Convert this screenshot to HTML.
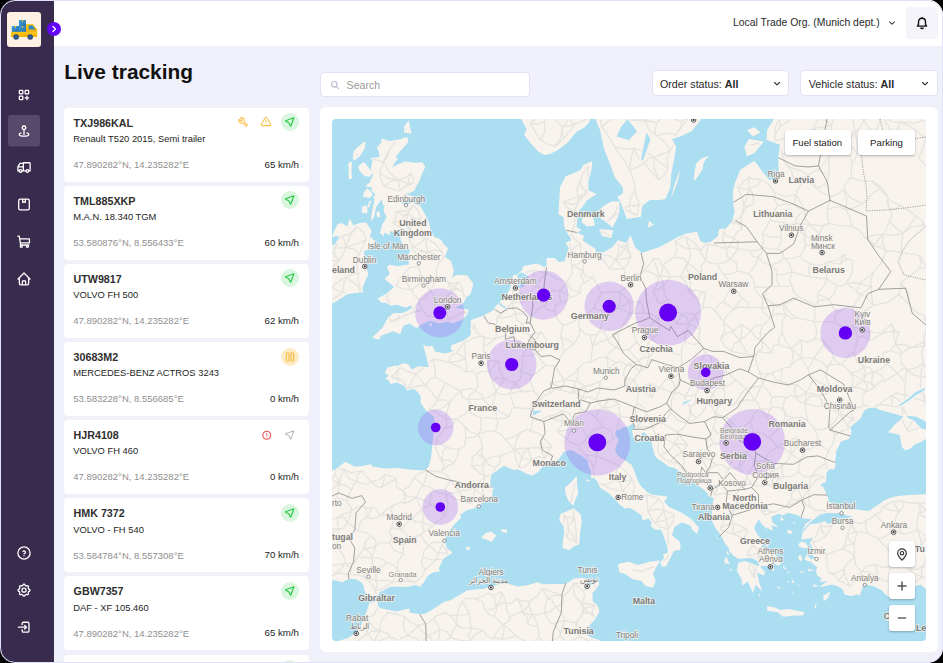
<!DOCTYPE html>
<html><head><meta charset="utf-8">
<style>
*{box-sizing:border-box;margin:0;padding:0}
html,body{width:943px;height:663px;overflow:hidden;background:#000;font-family:"Liberation Sans",sans-serif}
#frame{position:absolute;left:0;top:0;width:943px;height:663px;border-radius:15px;overflow:hidden;background:#f0f0fb}
#frame:after{content:"";position:absolute;left:0;top:0;right:0;bottom:0;border:1.5px solid #e0e0f6;border-radius:15px;pointer-events:none}
#side{position:absolute;left:0;top:0;width:54px;height:663px;background:#382b4d}
#logo{position:absolute;left:7px;top:12px;width:34px;height:35px;background:#fcf1e3;border-radius:3px}
#collapse{position:absolute;left:47px;top:22px;width:14px;height:14px;border-radius:50%;background:#6405fb}
#header{position:absolute;left:54px;top:0;width:889px;height:46px;background:#fff}
.abs{position:absolute;line-height:1;white-space:nowrap}
.navi{position:absolute;left:8px;width:32px;height:32px}
.card{position:absolute;left:64px;width:245px;height:74px;background:#fff;border-radius:4px}
.card div{position:absolute;line-height:1;white-space:nowrap}
.plate{left:9.6px;top:10px;font-weight:bold;font-size:10.7px;color:#2e2e2e}
.model{left:9.2px;top:26.3px;font-size:9.4px;color:#1e1e1e}
.coord{left:9.2px;top:52.3px;font-size:9.5px;color:#8f8f8f}
.speed{right:10px;top:52px;font-size:9.7px;color:#1e1e1e}
.card svg{position:absolute}
#search{position:absolute;left:320px;top:72px;width:210px;height:25px;background:#fff;border:1px solid #e2e2f2;border-radius:4px}
.dd{position:absolute;top:70.3px;height:26px;background:#fff;border:1px solid #e2e2f2;border-radius:4px}
#mappanel{position:absolute;left:320px;top:107px;width:618px;height:545px;background:#fff;border-radius:6px}
#map{position:absolute;left:332px;top:119px;width:594px;height:522px;border-radius:4px;overflow:hidden;background:#acdef2}
.mbtn{position:absolute;background:#fff;border-radius:3px;box-shadow:0 1px 2.5px rgba(0,0,0,.28)}
.lbl{position:absolute;line-height:1;white-space:nowrap;color:#6f6f6f;font-size:8px}
</style></head>
<body>
<div id="frame">
  <div id="header"></div>
  <div id="side"></div>
  <div id="logo">
    <svg width="34" height="35" viewBox="0 0 34 35">
      <defs><linearGradient id="bx" x1="0" y1="0" x2="1" y2="1"><stop offset="0" stop-color="#3aa0d8"/><stop offset="1" stop-color="#2a6fb0"/></linearGradient>
      <linearGradient id="tk" x1="0" y1="0" x2="0" y2="1"><stop offset="0" stop-color="#f8c91e"/><stop offset="1" stop-color="#f0b000"/></linearGradient></defs>
      <rect x="12" y="8" width="7" height="6" fill="url(#bx)"/>
      <rect x="4.8" y="14" width="7.2" height="6" fill="url(#bx)"/>
      <rect x="12" y="14" width="7" height="6" fill="url(#bx)"/>
      <rect x="14.9" y="8" width="1.2" height="1.8" fill="#f6c21a"/><rect x="7.8" y="14" width="1.2" height="1.8" fill="#f6c21a"/><rect x="14.9" y="14" width="1.2" height="1.8" fill="#f6c21a"/>
      <path d="M19 12h6.8l4.3 5.6v3H19z" fill="url(#tk)"/>
      <path d="M21.6 13.6h3.9l3.1 3.9h-7z" fill="#2f86c6"/>
      <rect x="4" y="19.8" width="26.1" height="5.2" fill="url(#tk)"/>
      <circle cx="9.1" cy="25" r="2.8" fill="#2b4f82"/><circle cx="23.2" cy="25" r="2.8" fill="#2b4f82"/>
      <circle cx="9.1" cy="25" r="1.1" fill="#3d6aa0"/><circle cx="23.2" cy="25" r="1.1" fill="#3d6aa0"/>
    </svg>
  </div>
  <div id="collapse"><svg width="14" height="14" viewBox="0 0 14 14"><path d="M6 4.5l2.5 2.5L6 9.5" fill="none" stroke="#fff" stroke-width="1.3" stroke-linecap="round" stroke-linejoin="round"/></svg></div>

  <!-- sidebar icons -->
  <svg class="abs" style="left:0;top:0" width="54" height="663" viewBox="0 0 54 663" fill="none" stroke="#fff" stroke-linecap="round" stroke-linejoin="round">
    <rect x="8" y="115" width="32" height="31.5" rx="3" fill="#56496c" stroke="none"/>
<path transform="translate(17.04 88.04) scale(0.58)" d="M4 4m0 1a1 1 0 0 1 1 -1h4a1 1 0 0 1 1 1v4a1 1 0 0 1 -1 1h-4a1 1 0 0 1 -1 -1z M14 4m0 1a1 1 0 0 1 1 -1h4a1 1 0 0 1 1 1v4a1 1 0 0 1 -1 1h-4a1 1 0 0 1 -1 -1z M4 14m0 1a1 1 0 0 1 1 -1h4a1 1 0 0 1 1 1v4a1 1 0 0 1 -1 1h-4a1 1 0 0 1 -1 -1z M14 17h6m-3 -3v6" stroke-width="2.24"/><path transform="translate(16.80 123.60) scale(0.6)" d="M12 7m-3 0a3 3 0 1 0 6 0a3 3 0 1 0 -6 0 M12 10v8 M7 15.5c-2 .7 -3 1.5 -3 2.5c0 1.7 3.6 3 8 3s8 -1.3 8 -3c0 -1 -1 -1.8 -3 -2.5" stroke-width="2.17"/><path transform="translate(15.84 159.34) scale(0.68)" d="M17 17m-2 0a2 2 0 1 0 4 0a2 2 0 1 0 -4 0 M7 17m-2 0a2 2 0 1 0 4 0a2 2 0 1 0 -4 0 M19 17h2v-11a1 1 0 0 0 -1 -1h-9v12m4 0h-6m-4 0h-2v-6h8m0 -5h-5l-3 5" stroke-width="1.91"/><path transform="translate(16.08 196.58) scale(0.66)" d="M4 4m0 2a2 2 0 0 1 2 -2h12a2 2 0 0 1 2 2v12a2 2 0 0 1 -2 2h-12a2 2 0 0 1 -2 -2z M10 4v5l2 -1l2 1v-5" stroke-width="1.97"/><path transform="translate(15.84 233.44) scale(0.68)" d="M8 19m-1.6 0a1.6 1.6 0 1 0 3.2 0a1.6 1.6 0 1 0 -3.2 0 M17 19m-1.6 0a1.6 1.6 0 1 0 3.2 0a1.6 1.6 0 1 0 -3.2 0 M3 4h2l2 13h12 M7 8h13v6h-12" stroke-width="1.91"/><path transform="translate(16.08 271.08) scale(0.66)" d="M5 12l-2 0l9 -9l9 9l-2 0 M5 12v7a2 2 0 0 0 2 2h10a2 2 0 0 0 2 -2v-7 M9.5 21v-5a1 1 0 0 1 1 -1h3a1 1 0 0 1 1 1v5" stroke-width="1.97"/><path transform="translate(15.84 544.84) scale(0.68)" d="M12 12m-9 0a9 9 0 1 0 18 0a9 9 0 1 0 -18 0 M12 16v.01 M12 13a2 2 0 0 0 .914 -3.782a1.98 1.98 0 0 0 -2.414 .483" stroke-width="1.91"/><path transform="translate(16.08 582.28) scale(0.66)" d="M10.325 4.317c.426 -1.756 2.924 -1.756 3.35 0a1.724 1.724 0 0 0 2.573 1.066c1.543 -.94 3.31 .826 2.37 2.37a1.724 1.724 0 0 0 1.065 2.572c1.756 .426 1.756 2.924 0 3.35a1.724 1.724 0 0 0 -1.066 2.573c.94 1.543 -.826 3.31 -2.37 2.37a1.724 1.724 0 0 0 -2.572 1.065c-.426 1.756 -2.924 1.756 -3.35 0a1.724 1.724 0 0 0 -2.573 -1.066c-1.543 .94 -3.31 -.826 -2.37 -2.37a1.724 1.724 0 0 0 -1.065 -2.572c-1.756 -.426 -1.756 -2.924 0 -3.35a1.724 1.724 0 0 0 1.066 -2.573c-.94 -1.543 .826 -3.31 2.37 -2.37c1 .608 2.296 .07 2.572 -1.065z M9 12a3 3 0 1 0 6 0a3 3 0 0 0 -6 0" stroke-width="1.97"/><path transform="translate(16.56 619.76) scale(0.62)" d="M9 8v-2a2 2 0 0 1 2 -2h7a2 2 0 0 1 2 2v12a2 2 0 0 1 -2 2h-7a2 2 0 0 1 -2 -2v-2 M3 12h13l-3 -3m0 6l3 -3" stroke-width="2.10"/>
  </svg>

  <div class="abs" style="left:64.2px;top:61.6px;font-size:20.9px;font-weight:bold;color:#111">Live tracking</div>

  <!-- header -->
  <div class="abs" style="left:733px;top:18.2px;font-size:10.4px;color:#2a2a2a">Local Trade Org. (Munich dept.)</div>
  <svg class="abs" style="left:887px;top:19px" width="10" height="8"><path d="M2.5 2.8l2.5 2.4 2.5-2.4" fill="none" stroke="#444" stroke-width="1.1" stroke-linecap="round" stroke-linejoin="round"/></svg>
  <div class="abs" style="left:906px;top:7px;width:32px;height:32px;background:#f4f4fa;border-radius:4px"></div>
  <svg class="abs" style="left:914px;top:15px" width="16" height="16" viewBox="0 0 16 16" fill="none" stroke="#111" stroke-width="1.4" stroke-linejoin="round"><path d="M8 3.2c-2.1 0-3.5 1.6-3.5 3.7v2.6l-1.1 1.6h9.2l-1.1-1.6V6.9c0-2.1-1.4-3.7-3.5-3.7z"/><path d="M8 2.2v1"/><path d="M6.6 12.6c.3.6.8.9 1.4.9s1.1-.3 1.4-.9"/></svg>

  <!-- search & filters -->
  <div id="search"></div>
  <svg class="abs" style="left:330px;top:80px" width="10" height="10" viewBox="0 0 10 10" fill="none" stroke="#b9b9d0" stroke-width="1.1"><circle cx="4.3" cy="4.3" r="2.8"/><path d="M6.4 6.4l2.2 2.2" stroke-linecap="round"/></svg>
  <div class="abs" style="left:346.6px;top:80.2px;font-size:10.6px;color:#9a9a9a">Search</div>
  <div class="dd" style="left:652px;width:137px"></div>
  <div class="abs" style="left:660px;top:79.2px;font-size:10.7px;color:#2a2a2a">Order status: <b>All</b></div>
  <svg class="abs" style="left:772px;top:79.5px" width="10" height="8"><path d="M2.5 2.5l2.5 2.4 2.5-2.4" fill="none" stroke="#333" stroke-width="1.1" stroke-linecap="round" stroke-linejoin="round"/></svg>
  <div class="dd" style="left:800px;width:138px"></div>
  <div class="abs" style="left:808.7px;top:79.2px;font-size:10.7px;color:#2a2a2a">Vehicle status: <b>All</b></div>
  <svg class="abs" style="left:920px;top:79.5px" width="10" height="8"><path d="M2.5 2.5l2.5 2.4 2.5-2.4" fill="none" stroke="#333" stroke-width="1.1" stroke-linecap="round" stroke-linejoin="round"/></svg>

  <div class="card" style="top:107.50px"><div class="plate">TXJ986KAL</div><div class="model">Renault T520 2015, Semi trailer</div><div class="coord">47.890282°N, 14.235282°E</div><div class="speed">65 km/h</div><svg style="left:170px;top:5.5px" width="18" height="18" viewBox="0 0 18 18"><path transform="translate(3.5 3.3) scale(0.46)" d="M7 10h3v-3l-3.5 -3.5a6 6 0 0 1 8 8l6 6a2 2 0 0 1 -3 3l-6 -6a6 6 0 0 1 -8 -8l3.5 3.5" fill="none" stroke="#fbbf4a" stroke-width="2.3" stroke-linejoin="round" stroke-linecap="round"/></svg><svg style="left:192.5px;top:5.5px" width="18" height="18" viewBox="0 0 18 18"><path transform="translate(3.2 3.0) scale(0.48)" d="M12 9v4 M10.363 3.591l-8.106 13.534a1.914 1.914 0 0 0 1.636 2.871h16.214a1.914 1.914 0 0 0 1.636 -2.87l-8.106 -13.536a1.914 1.914 0 0 0 -3.274 0z M12 16h.01" fill="none" stroke="#fbbf4a" stroke-width="2.2" stroke-linejoin="round" stroke-linecap="round"/></svg><svg style="left:216.5px;top:5.5px" width="18" height="18" viewBox="0 0 18 18"><circle cx="9" cy="9" r="9" fill="#dbf6de"/><path transform="translate(3.2 3.4) scale(0.46)" d="M21 3L14.5 21a.55 .55 0 0 1 -1 0L10 14L3 10.5a.55 .55 0 0 1 0 -1L21 3" fill="none" stroke="#2bcc4a" stroke-width="2.6" stroke-linejoin="round" stroke-linecap="round"/></svg></div>
<div class="card" style="top:185.65px"><div class="plate">TML885XKP</div><div class="model">M.A.N. 18.340 TGM</div><div class="coord">53.580876°N, 8.556433°E</div><div class="speed">60 km/h</div><svg style="left:216.5px;top:5.5px" width="18" height="18" viewBox="0 0 18 18"><circle cx="9" cy="9" r="9" fill="#dbf6de"/><path transform="translate(3.2 3.4) scale(0.46)" d="M21 3L14.5 21a.55 .55 0 0 1 -1 0L10 14L3 10.5a.55 .55 0 0 1 0 -1L21 3" fill="none" stroke="#2bcc4a" stroke-width="2.6" stroke-linejoin="round" stroke-linecap="round"/></svg></div>
<div class="card" style="top:263.80px"><div class="plate">UTW9817</div><div class="model">VOLVO FH 500</div><div class="coord">47.890282°N, 14.235282°E</div><div class="speed">62 km/h</div><svg style="left:216.5px;top:5.5px" width="18" height="18" viewBox="0 0 18 18"><circle cx="9" cy="9" r="9" fill="#dbf6de"/><path transform="translate(3.2 3.4) scale(0.46)" d="M21 3L14.5 21a.55 .55 0 0 1 -1 0L10 14L3 10.5a.55 .55 0 0 1 0 -1L21 3" fill="none" stroke="#2bcc4a" stroke-width="2.6" stroke-linejoin="round" stroke-linecap="round"/></svg></div>
<div class="card" style="top:341.95px"><div class="plate">30683M2</div><div class="model">MERCEDES-BENZ ACTROS 3243</div><div class="coord">53.583228°N, 8.556685°E</div><div class="speed">0 km/h</div><svg style="left:216.5px;top:6px" width="18" height="18" viewBox="0 0 18 18"><circle cx="9" cy="9" r="9" fill="#fdebc6"/><rect x="5.3" y="4.6" width="2.7" height="8.8" rx="1.2" fill="none" stroke="#f7b52a" stroke-width="1"/><rect x="10" y="4.6" width="2.7" height="8.8" rx="1.2" fill="none" stroke="#f7b52a" stroke-width="1"/></svg></div>
<div class="card" style="top:420.10px"><div class="plate">HJR4108</div><div class="model">VOLVO FH 460</div><div class="coord">47.890282°N, 14.235282°E</div><div class="speed">0 km/h</div><svg style="left:193.7px;top:5.8px" width="18" height="18" viewBox="0 0 18 18"><path transform="translate(3.5 4) scale(0.44)" d="M12 12m-9 0a9 9 0 1 0 18 0a9 9 0 1 0 -18 0 M12 8v4 M12 16h.01" fill="none" stroke="#ef5350" stroke-width="2.4" stroke-linejoin="round" stroke-linecap="round"/></svg><svg style="left:216.5px;top:5.5px" width="18" height="18" viewBox="0 0 18 18"><path transform="translate(3.2 3.4) scale(0.46)" d="M21 3L14.5 21a.55 .55 0 0 1 -1 0L10 14L3 10.5a.55 .55 0 0 1 0 -1L21 3" fill="none" stroke="#bdbdbd" stroke-width="2.3" stroke-linejoin="round" stroke-linecap="round"/></svg></div>
<div class="card" style="top:498.25px"><div class="plate">HMK 7372</div><div class="model">VOLVO - FH 540</div><div class="coord">53.584784°N, 8.557308°E</div><div class="speed">70 km/h</div><svg style="left:216.5px;top:5.5px" width="18" height="18" viewBox="0 0 18 18"><circle cx="9" cy="9" r="9" fill="#dbf6de"/><path transform="translate(3.2 3.4) scale(0.46)" d="M21 3L14.5 21a.55 .55 0 0 1 -1 0L10 14L3 10.5a.55 .55 0 0 1 0 -1L21 3" fill="none" stroke="#2bcc4a" stroke-width="2.6" stroke-linejoin="round" stroke-linecap="round"/></svg></div>
<div class="card" style="top:576.40px"><div class="plate">GBW7357</div><div class="model">DAF - XF 105.460</div><div class="coord">47.890282°N, 14.235282°E</div><div class="speed">65 km/h</div><svg style="left:216.5px;top:5.5px" width="18" height="18" viewBox="0 0 18 18"><circle cx="9" cy="9" r="9" fill="#dbf6de"/><path transform="translate(3.2 3.4) scale(0.46)" d="M21 3L14.5 21a.55 .55 0 0 1 -1 0L10 14L3 10.5a.55 .55 0 0 1 0 -1L21 3" fill="none" stroke="#2bcc4a" stroke-width="2.6" stroke-linejoin="round" stroke-linecap="round"/></svg></div>
<div class="card" style="top:654.55px"><div class="plate">ABC1234</div><div class="model">VOLVO FH 500</div><div class="coord">47.890282°N, 14.235282°E</div><div class="speed">65 km/h</div><svg style="left:216.5px;top:5.5px" width="18" height="18" viewBox="0 0 18 18"><circle cx="9" cy="9" r="9" fill="#dbf6de"/><path transform="translate(3.2 3.4) scale(0.46)" d="M21 3L14.5 21a.55 .55 0 0 1 -1 0L10 14L3 10.5a.55 .55 0 0 1 0 -1L21 3" fill="none" stroke="#2bcc4a" stroke-width="2.6" stroke-linejoin="round" stroke-linecap="round"/></svg></div>

  <div id="mappanel"></div>
  <div id="map"><svg width="594" height="522" viewBox="0 0 594 522" style="position:absolute;left:0;top:0"><path fill="#f8f4ed" d="M184.8,-72.8 188.4,-1.3 194.7,10.3 192.2,16.1 198.2,23.8 206.4,32.8 212.5,35.9 217.9,34.9 225.3,31.6 235.7,23.6 244.3,12.9 252.7,8.2 257.7,2.4 259.0,-6.3 259.0,-72.8 261.8,-72.8 261.1,-6.3 265.1,4.3 268.1,11.1 271.6,28.5 277.3,43.0 282.7,58.0 290.9,68.7 290.8,74.5 285.4,77.7 288.8,83.8 292.8,94.6 294.8,100.1 303.9,98.6 309.0,97.7 310.4,86.7 317.9,80.9 327.8,81.1 333.3,80.1 338.2,68.9 339.4,54.0 341.9,41.5 344.1,27.7 340.0,20.0 348.2,17.4 359.6,12.2 368.4,1.6 372.5,-72.8Z M441.3,-72.8 442.0,0.3 435.1,11.1 434.5,20.7 448.0,25.7 446.2,38.7 446.7,54.3 442.0,59.8 437.2,61.3 422.4,41.7 408.4,50.8 403.1,63.5 400.8,72.8 401.6,86.9 402.6,92.2 400.4,101.7 393.8,109.7 387.0,110.0 386.0,117.0 379.2,122.8 373.1,124.0 369.1,122.8 367.7,120.0 364.8,112.8 354.2,114.4 344.8,118.4 338.7,121.9 327.6,127.9 309.7,134.1 306.3,130.9 303.2,128.6 298.6,116.3 294.1,124.0 286.0,121.2 280.4,127.9 271.9,133.2 264.0,133.0 263.4,129.8 254.2,124.0 250.3,121.2 252.3,117.0 244.9,113.5 249.6,111.2 244.6,107.9 245.5,97.2 248.9,95.3 246.2,92.2 250.3,88.3 255.0,81.3 264.9,75.0 256.4,71.6 256.4,64.2 256.4,61.7 259.3,52.3 259.6,49.5 260.4,42.0 251.8,45.8 248.4,51.3 233.4,57.5 228.0,67.9 227.1,85.0 226.4,95.5 231.4,97.7 232.0,106.5 233.7,111.2 239.5,121.0 233.4,124.0 236.9,129.1 234.8,135.0 232.7,142.3 227.1,143.0 222.6,138.9 214.5,138.9 214.5,146.4 211.8,148.0 210.9,147.3 205.0,144.6 198.3,145.7 191.5,146.9 190.2,150.9 184.8,155.9 181.6,155.7 180.1,159.9 179.1,166.8 177.0,171.7 174.9,175.2 172.9,177.4 169.9,180.9 163.7,187.2 161.6,191.1 156.7,193.7 149.3,197.5 142.3,199.7 138.6,201.4 138.9,204.6 138.6,208.9 138.9,215.6 135.8,218.6 131.9,221.5 122.3,224.9 119.3,226.5 118.7,230.5 121.4,231.7 118.2,233.2 113.2,234.4 103.1,232.6 100.3,226.8 95.4,227.4 91.1,225.7 93.1,233.0 95.7,243.9 96.9,248.0 90.3,247.8 86.0,247.2 80.0,250.5 76.1,245.1 70.7,244.3 65.3,247.2 63.6,246.4 55.2,248.8 52.9,254.3 56.6,255.9 53.4,260.2 56.6,261.0 58.3,265.0 64.4,263.6 71.8,266.4 75.2,271.4 80.2,270.0 83.6,271.0 87.6,275.6 88.9,278.8 88.3,283.0 93.3,290.8 101.8,297.5 102.4,301.6 103.1,308.3 101.8,310.3 100.4,326.5 99.1,338.8 96.2,348.5 93.1,350.6 90.6,351.5 76.8,350.4 66.0,348.9 53.2,349.6 40.9,347.4 38.3,345.2 29.1,347.2 22.3,347.4 13.5,342.7 5.9,348.5 3.9,350.6 -1.6,351.5 -17.7,353.7 -17.7,463.3 0.3,461.6 2.0,461.2 5.9,461.9 10.2,463.3 14.0,461.2 17.1,460.0 23.5,459.9 28.9,463.3 31.6,466.6 32.2,471.2 35.9,477.0 41.7,479.9 43.7,477.9 45.1,477.7 47.8,473.0 51.4,471.5 57.6,468.0 64.9,467.5 69.8,468.0 76.5,467.5 84.1,466.0 87.7,468.0 91.7,463.4 96.0,456.5 100.3,453.8 104.1,453.1 108.0,452.6 106.8,449.7 108.1,446.6 109.9,442.8 110.8,440.2 115.5,437.0 120.4,433.7 118.7,431.8 114.9,429.5 112.8,420.8 114.3,417.3 117.6,411.8 122.7,405.1 129.0,398.7 128.1,395.9 134.2,391.6 141.6,389.6 146.7,386.9 150.2,384.0 155.0,381.7 159.6,378.4 160.5,374.8 160.2,371.0 162.1,369.9 160.0,367.9 158.5,365.7 158.3,362.9 158.5,359.2 160.1,354.6 164.6,352.2 167.2,350.0 170.4,347.6 172.4,347.0 177.1,349.1 182.5,351.3 184.1,350.0 189.8,351.9 192.1,353.5 192.9,354.3 197.4,355.6 200.1,356.8 203.3,354.8 206.9,352.4 208.7,349.6 211.9,347.2 213.6,347.0 215.4,344.4 217.5,343.8 222.3,342.2 225.7,341.0 228.3,337.9 231.8,333.1 237.9,331.1 241.9,332.2 249.9,336.9 255.7,341.2 256.4,347.2 259.0,351.9 259.0,358.7 262.4,358.9 265.8,362.9 267.8,368.4 276.6,373.9 283.1,380.6 287.7,385.7 293.5,389.8 296.2,388.7 300.5,390.2 305.4,393.4 309.7,396.4 310.4,401.4 314.4,400.3 316.7,399.5 319.8,404.1 318.5,407.1 323.6,411.0 328.3,410.3 330.3,413.3 333.7,422.7 336.0,430.7 335.5,433.7 331.0,435.6 332.0,439.0 329.5,442.0 328.6,444.5 329.9,447.6 334.1,447.6 336.8,442.1 340.7,434.5 341.7,432.1 348.2,430.7 348.6,427.6 347.7,422.4 340.0,416.4 342.5,408.0 350.0,403.2 359.0,407.1 360.0,410.6 365.2,415.0 366.9,408.8 359.6,400.2 350.9,394.6 345.0,391.6 337.1,388.0 332.2,382.4 335.7,377.9 331.7,377.0 319.8,375.7 315.8,373.5 309.1,367.3 305.8,362.0 304.7,358.3 299.8,345.9 291.6,340.5 287.0,337.7 284.7,335.0 283.1,330.9 286.7,320.8 283.1,315.7 283.8,311.4 288.1,310.3 291.5,308.3 298.2,306.8 300.0,304.5 303.2,307.4 302.7,309.3 299.8,311.6 300.9,315.5 301.3,318.3 304.3,322.3 305.2,324.2 307.9,318.3 310.4,313.4 312.2,313.5 315.8,316.6 318.5,320.1 320.9,329.0 322.9,336.5 325.7,339.9 332.0,343.8 336.7,347.8 339.2,348.0 342.6,349.3 347.1,351.9 352.6,356.5 356.2,360.4 361.5,363.8 363.3,365.1 367.5,367.5 371.6,370.4 375.2,373.9 376.5,377.2 381.8,379.2 379.9,388.0 379.9,395.0 380.4,403.2 383.8,409.7 387.3,413.8 390.9,420.3 392.7,424.1 397.4,429.9 397.0,431.9 401.9,437.1 406.6,439.9 412.0,439.5 420.0,438.9 426.5,442.8 427.1,447.4 422.4,445.4 413.0,442.0 406.2,443.7 404.9,451.9 409.6,459.9 410.2,466.6 415.8,462.6 420.8,473.7 423.8,465.8 430.5,472.7 427.1,463.3 425.1,453.6 431.9,456.5 433.2,453.1 427.8,447.4 432.5,446.8 436.4,447.3 438.3,449.7 441.6,452.2 442.0,451.2 441.3,445.9 441.3,443.7 446.7,446.8 449.4,443.7 444.7,439.4 442.9,435.4 436.6,431.6 431.9,428.6 428.5,429.0 430.5,426.7 431.2,422.0 427.8,418.5 424.4,414.1 422.4,409.7 423.1,406.2 427.0,400.2 429.2,404.4 437.0,412.9 433.2,408.0 441.0,411.8 439.3,406.2 446.7,408.8 440.6,403.5 439.3,397.7 446.8,394.8 450.8,396.4 456.2,393.7 466.5,396.4 469.0,398.7 479.8,400.5 473.7,404.8 470.7,410.6 471.0,411.5 469.1,420.6 481.1,418.9 477.8,423.4 480.2,427.8 480.9,430.2 478.4,434.7 483.7,439.0 478.4,440.2 475.0,435.1 472.4,440.7 478.8,442.8 485.3,448.6 483.8,451.7 485.4,456.8 489.9,459.2 487.6,462.8 495.3,462.4 486.8,468.3 498.9,465.8 503.8,466.6 510.2,469.7 512.9,475.7 517.4,476.7 522.0,476.7 524.3,475.0 527.7,476.7 529.9,470.0 531.8,465.3 541.1,467.1 549.3,471.0 553.5,475.5 560.1,479.7 567.1,477.7 575.6,475.0 580.3,470.0 584.8,466.6 588.5,465.8 594.8,470.5 616.8,471.7 616.8,375.7 591.8,375.2 573.1,376.3 562.8,377.5 554.6,380.2 552.0,381.5 546.6,385.7 541.5,388.7 537.4,392.1 531.1,391.6 525.3,390.5 516.9,390.5 510.4,389.8 510.2,389.6 504.5,387.5 496.7,382.4 495.7,377.9 493.3,372.6 491.2,368.1 488.1,366.6 491.7,363.7 494.0,362.9 494.6,353.7 497.6,349.8 501.6,350.7 503.4,347.4 503.1,342.5 504.1,335.6 503.8,332.8 509.3,322.3 516.9,319.9 519.6,312.8 518.2,308.3 528.4,299.6 532.4,291.2 537.2,288.9 543.2,288.5 547.3,290.8 554.7,292.8 565.5,295.7 571.6,297.7 567.5,301.6 562.8,305.4 558.8,310.3 556.0,313.2 567.8,316.0 569.8,327.5 572.9,331.6 578.6,329.4 582.0,326.0 589.4,322.7 594.9,319.3 616.8,319.9 616.8,-72.8Z M-17.7,529.2 14.4,519.5 17.5,517.9 25.0,512.7 28.2,508.8 34.3,493.5 35.9,489.0 37.4,483.6 38.9,483.7 42.4,482.6 45.8,481.9 45.8,486.7 48.5,489.2 64.2,492.5 77.2,489.5 77.7,493.8 87.6,495.0 92.2,495.0 98.7,491.7 108.8,485.0 113.2,482.6 118.5,481.2 135.0,471.5 146.9,470.0 150.4,470.2 158.6,467.5 170.1,464.6 177.0,464.9 185.9,467.5 195.2,466.3 206.0,463.3 210.5,465.3 222.1,464.9 231.2,464.9 235.6,464.1 241.8,459.4 250.5,458.7 256.1,460.4 256.4,466.6 260.0,466.1 266.5,461.9 267.1,465.8 262.2,472.5 260.4,473.4 260.9,482.9 263.5,483.9 266.6,488.4 267.4,492.7 262.6,500.9 259.0,504.4 253.0,513.0 253.6,515.0 258.4,517.9 262.4,519.5 267.1,521.1 272.5,526.0 272.5,529.2Z M49.8,19.4 53.2,20.7 57.9,22.0 69.8,20.0 71.7,18.2 76.5,18.9 75.6,24.1 68.0,32.3 63.3,38.7 66.3,38.9 62.9,43.5 60.3,48.5 65.1,45.8 73.0,42.5 83.3,43.8 90.3,43.2 93.3,48.0 89.2,56.8 87.6,61.5 84.0,67.7 82.5,71.4 78.2,73.8 72.8,75.3 79.5,76.7 82.5,78.2 74.8,82.3 67.1,83.3 71.4,85.0 74.5,85.5 80.6,83.5 83.3,85.0 88.5,86.9 90.3,90.5 96.0,101.0 98.1,108.3 98.8,111.2 101.8,117.5 109.1,120.7 111.9,125.6 116.2,129.3 112.8,138.0 118.8,141.7 121.9,151.6 120.0,159.2 123.9,156.1 134.9,156.3 140.7,163.7 141.1,166.3 138.6,175.0 134.7,178.0 132.8,181.5 130.1,185.7 122.7,188.9 136.9,190.4 135.1,196.0 130.5,200.5 120.7,204.4 115.4,202.5 106.6,204.4 102.4,202.9 98.4,201.8 90.6,205.0 84.1,209.1 77.6,204.6 71.3,206.7 68.2,215.2 61.4,212.3 48.9,216.7 47.1,220.7 40.2,218.4 43.3,215.4 50.6,208.4 56.3,198.2 61.7,194.1 70.5,194.1 77.1,191.1 80.9,187.8 77.1,186.7 74.5,188.7 64.0,185.7 59.2,186.7 53.9,184.1 49.1,183.5 45.6,179.6 54.4,174.7 62.2,167.9 52.6,160.1 57.9,154.8 54.8,147.8 57.9,145.7 65.6,147.3 75.4,145.7 76.8,145.7 76.8,140.1 76.1,136.2 78.6,130.4 73.7,129.8 68.2,120.3 71.4,111.9 73.3,109.3 62.6,112.8 57.9,112.3 57.9,116.3 51.8,113.5 51.7,117.5 47.8,113.5 49.1,110.0 49.8,106.5 51.7,103.1 54.8,97.9 52.2,93.6 51.6,89.8 52.9,86.2 50.9,86.2 49.8,80.1 44.1,88.1 43.3,92.2 41.7,98.9 39.0,101.7 39.7,94.6 41.0,87.4 42.2,82.8 41.7,77.7 43.5,75.0 39.0,71.6 40.4,68.4 33.3,67.2 38.3,63.0 38.6,60.5 41.3,55.5 40.2,53.5 38.7,49.8 40.4,42.5 38.9,38.9 47.6,37.9 46.4,31.6 44.7,28.7 49.1,23.8 49.8,19.4Z M17.8,99.8 21.5,106.5 27.5,104.1 34.3,103.6 39.7,112.3 37.6,117.0 43.7,122.8 35.6,130.9 31.6,132.1 33.1,138.5 35.4,146.2 35.0,150.3 36.4,155.7 34.4,159.2 30.2,169.4 31.4,173.2 22.8,174.1 14.7,175.2 11.3,178.0 5.9,181.3 2.6,183.5 -17.7,186.7 -17.7,126.3 2.6,125.8 5.9,120.5 7.3,117.0 -0.1,117.7 1.7,113.0 3.5,109.3 5.5,105.3 9.6,104.1 15.4,107.6 16.7,102.9Z M328.6,441.6 324.4,448.0 321.0,454.8 323.7,461.9 320.9,468.7 313.0,466.8 309.7,462.1 300.2,459.9 292.8,454.8 287.7,453.4 285.8,446.2 288.8,444.2 296.9,442.8 301.6,444.5 306.3,445.9 317.1,442.8 328.6,441.6Z M241.8,389.3 248.5,395.2 249.9,402.7 248.2,412.7 247.2,425.5 241.5,427.6 236.9,431.2 230.7,429.0 230.7,423.2 232.3,413.3 231.4,407.1 227.1,400.9 228.7,395.0 235.4,392.0 241.8,389.3Z M244.9,357.4 244.9,362.9 246.2,373.9 242.4,383.0 241.5,387.1 236.1,381.2 233.4,373.9 233.1,368.4 238.8,363.8 243.5,358.3 244.9,357.4Z M435.2,487.0 442.7,488.4 448.0,490.9 456.2,490.0 464.9,491.7 472.4,493.3 471.0,496.6 461.5,496.6 451.4,497.8 445.4,493.3 435.2,491.7 435.2,487.0Z M584.1,485.0 575.0,495.0 571.6,497.1 562.1,503.9 554.7,501.6 552.9,495.8 561.5,493.8 570.9,490.9 584.1,485.0Z M159.2,412.4 164.1,416.4 159.8,422.9 153.8,420.3 149.0,418.9 153.8,414.1 159.2,412.4Z M168.6,410.6 174.7,410.6 175.4,414.1 169.3,412.4Z M134.9,427.3 138.9,429.0 136.2,431.6 133.8,429.9Z M287.4,82.6 287.4,92.2 285.4,99.3 280.6,108.8 275.2,104.1 268.5,99.3 265.8,92.2 272.5,86.2 279.3,82.6 287.4,82.6Z M260.4,95.8 263.1,106.5 255.0,107.6 249.6,102.9 251.0,97.0 260.4,95.8Z M267.1,110.0 281.3,111.2 279.3,118.9 269.9,117.0 267.1,110.0Z M317.1,101.7 321.8,105.7 315.8,108.8Z M348.2,51.3 345.5,63.0 338.7,80.1 341.7,67.9 346.1,55.5Z M377.2,36.7 371.8,43.0 370.4,50.5 366.4,56.8 361.9,62.5 362.3,55.5 363.0,50.5 364.2,44.5 369.8,39.2Z M417.0,20.0 431.9,22.6 422.4,34.1 415.0,37.4 412.3,27.7 417.0,20.0Z M422.4,8.2 428.5,13.5 421.0,17.4 415.0,10.9 422.4,8.2Z M469.7,422.4 473.7,423.8 476.4,428.1 473.0,429.5 466.3,427.3 467.0,424.6Z M469.0,435.9 470.3,440.2 468.3,442.8 466.3,439.4 467.0,436.3Z M476.1,449.7 482.5,451.4 476.4,452.2Z M468.3,451.7 473.0,453.9 468.3,453.4Z M498.3,472.5 496.0,479.2 491.9,482.1 491.2,476.7Z M481.1,464.9 486.5,467.0 481.8,468.0Z M484.5,482.6 483.8,490.0 482.5,488.4Z M460.9,459.9 462.2,464.1 459.5,464.1Z M456.2,460.7 457.5,463.6 455.5,463.3Z M450.8,446.6 454.8,450.5 451.4,449.7Z M455.5,452.2 458.2,453.9 455.5,453.9Z M446.0,467.0 448.7,469.2 445.4,469.2Z M459.9,472.0 461.3,474.2 459.9,474.0Z M466.3,464.9 468.3,466.6 466.3,466.6Z M455.5,410.6 460.9,412.4 458.9,415.0 455.5,414.1Z M448.7,397.3 452.1,400.9 448.7,401.8Z M460.9,402.7 464.2,404.1 460.9,404.4Z M447.4,429.9 450.1,432.5 446.7,432.1Z M433.9,425.5 437.9,427.3 433.9,426.9Z M395.4,431.6 397.4,435.9 394.7,435.1Z M427.1,474.2 428.5,477.5 426.5,476.7Z M394.7,437.6 396.1,442.0 398.1,444.9 393.4,444.5 392.0,442.0Z M382.6,415.0 388.7,422.0 385.3,418.5Z M396.8,448.0 400.1,451.4 398.8,452.2Z M58.6,122.8 52.5,130.9 53.9,126.3Z M99.8,203.5 99.8,207.6 96.4,205.9Z M255.0,360.2 258.4,362.6 253.6,362.0Z M33.6,22.0 32.9,29.0 28.2,36.7 22.1,41.7 20.8,39.2 21.5,32.8 24.8,29.0 30.9,23.8Z M20.1,42.5 19.4,51.8 20.1,59.3 16.7,60.5 16.7,50.5 16.1,44.3Z M32.2,43.0 35.0,46.8 41.0,54.3 37.0,58.0 32.2,56.8 27.5,51.8 26.2,48.0 28.9,45.0Z M35.6,69.1 41.0,75.3 37.6,78.9 30.9,77.7 32.2,72.8Z M35.0,86.2 35.6,94.6 29.6,93.4 30.2,87.4Z M39.7,81.3 37.0,88.6 35.6,89.3 37.0,82.6Z M47.1,91.7 48.5,98.2 45.1,98.2 44.4,93.4Z M76.8,1.6 79.5,14.8 72.1,13.5 72.1,6.9Z M310.8,480.4 314.1,483.4 311.0,482.1Z"/><path fill="#acdef2" d="M295.5,0.3 305.0,12.2 296.9,21.3 284.7,17.4 288.8,8.2 295.5,0.3Z M314.4,13.5 309.0,40.5 311.0,41.7 318.5,20.0Z M481.8,9.5 489.9,25.1 491.2,37.9 487.2,27.7 485.9,12.2Z M361.0,280.0 350.9,285.9 351.5,283.0Z M201.0,291.8 201.0,296.7 210.5,291.8Z M566.8,429.0 569.5,435.9 565.5,432.5Z M575.0,296.7 584.4,297.7 595.2,303.5 595.9,311.2 589.1,309.3 581.7,301.6 575.6,298.7Z M566.8,285.9 575.6,280.0 583.7,273.0 592.5,269.0 593.2,271.0 584.4,276.0 576.3,282.0 568.2,286.9Z M188.9,153.6 185.5,155.9 185.5,163.7 186.8,169.2 192.9,167.0 192.2,162.6 197.0,158.1 192.9,154.8Z M167.2,183.5 174.7,188.9 174.0,190.0 166.6,185.7Z M470.3,411.5 473.4,408.5 477.5,404.1 481.8,400.5 487.9,395.5 495.3,394.1 503.4,394.3 508.5,393.7 509.9,389.8 511.0,389.8 509.9,393.4 512.9,395.9 521.2,397.7 514.9,399.1 509.5,403.5 502.0,404.1 495.0,404.8 493.3,402.3 485.9,404.4 478.0,405.3 474.4,409.2 471.3,412.4Z"/><path fill="none" stroke="#e5e4e1" stroke-width="1.35" d="M130.8,172.6 132.6,178.8 M132.9,191.5 132.7,192.5 M468.9,238.4 465.8,241.0 459.7,244.9 M590.8,457.9 589.0,452.3 591.5,446.5 M550.5,214.3 552.6,211.2 559.8,204.8 M167.3,242.2 164.3,244.8 157.8,252.4 M439.7,234.4 431.6,233.5 425.8,232.3 M138.7,522.1 127.9,521.4 118.4,518.4 M163.9,272.5 167.8,275.3 177.3,275.1 M277.4,149.5 281.7,143.4 284.1,140.6 M110.7,423.6 101.3,423.0 97.0,426.8 M430.5,179.3 424.5,173.4 422.6,167.9 M516.6,309.7 516.8,308.2 M516.8,308.1 517.4,302.5 522.3,301.1 M366.1,264.0 358.9,267.8 353.2,277.1 M531.3,84.6 519.8,89.6 513.9,90.8 M43.7,449.2 44.3,453.9 43.8,461.5 M511.7,449.8 513.7,458.4 518.2,468.0 M58.8,28.1 63.6,22.6 M73.6,10.5 75.0,8.8 M269.5,326.9 260.8,322.9 256.1,317.7 M40.5,387.5 36.2,389.5 30.3,387.1 M163.9,348.6 168.1,344.3 168.6,336.8 M436.7,318.4 429.0,313.2 420.2,313.4 M421.5,426.7 427.3,432.4 428.3,436.3 M260.6,226.9 268.9,222.7 276.0,220.2 M71.4,434.6 71.1,426.1 75.6,422.3 M232.1,260.8 241.6,255.0 246.3,249.5 M211.3,317.8 208.8,325.7 207.6,328.9 M307.7,270.4 313.2,266.5 318.8,264.7 M603.3,309.3 597.1,307.6 M581.0,303.0 580.2,302.8 M525.1,33.7 523.2,40.3 520.0,44.4 M153.3,340.6 149.2,335.0 150.7,326.4 M550.4,387.9 548.0,394.0 543.1,395.1 M407.8,221.8 402.6,224.8 399.3,232.3 M506.5,461.8 512.0,454.5 511.7,449.8 M127.1,330.1 132.5,327.0 133.7,318.9 M105.5,281.0 113.0,281.0 117.7,283.5 M293.8,268.2 298.0,265.1 302.0,261.2 M151.6,511.3 154.5,516.2 160.0,520.2 M416.8,448.2 418.1,445.4 M416.3,437.7 415.8,436.8 M549.1,-4.2 556.5,7.0 562.8,18.8 M342.4,396.0 331.1,401.9 322.8,403.6 M61.0,386.3 58.9,391.6 61.7,397.2 M61.7,397.2 60.0,407.7 57.0,412.4 M276.4,279.3 268.3,282.6 264.2,280.6 M121.7,344.6 116.6,340.7 109.7,342.1 M502.5,203.1 503.2,196.0 506.1,193.2 M327.8,336.4 337.4,331.7 342.4,325.0 M391.0,284.8 393.3,274.2 390.9,268.9 M212.5,493.4 217.7,492.9 223.5,488.1 M448.2,7.3 447.1,-0.6 450.3,-6.6 M497.1,180.4 501.7,175.5 504.9,166.2 M269.8,173.9 264.0,164.5 261.6,158.5 M72.7,497.6 71.2,507.6 75.2,516.8 M403.2,376.8 393.7,373.8 382.5,376.3 M463.9,198.6 455.6,191.5 451.8,184.9 M575.0,250.6 570.9,249.7 565.2,254.3 M434.6,168.4 430.9,168.5 422.6,167.9 M555.9,499.2 563.4,497.6 569.5,494.4 M233.1,501.3 229.9,510.0 228.1,517.6 M481.6,260.0 478.2,256.5 476.0,250.0 M388.8,365.1 385.7,368.0 382.5,376.3 M443.5,73.8 435.7,64.5 429.3,60.5 M107.4,143.7 103.9,135.9 95.6,133.2 M586.7,39.0 590.1,30.7 594.1,19.6 M497.3,104.4 491.9,106.4 487.6,114.2 M238.5,178.4 234.7,170.1 234.6,162.9 M434.9,299.1 440.9,304.6 449.8,306.2 M116.1,434.4 104.9,433.3 97.0,426.8 M315.4,296.1 319.2,300.9 320.7,309.0 M249.4,308.0 252.3,313.3 256.1,317.7 M284.1,360.6 290.2,362.9 300.3,360.3 M553.5,261.9 557.2,259.2 565.2,254.3 M589.1,257.7 582.1,256.2 575.0,250.6 M497.1,180.4 487.6,181.3 483.0,186.6 M449.8,306.2 455.9,301.1 461.3,298.9 M143.9,272.0 138.5,275.1 136.3,280.3 M401.6,118.9 399.7,124.5 394.6,129.6 M485.1,-10.0 491.9,-7.6 503.1,-6.9 M487.3,276.7 478.0,277.4 472.7,284.0 M189.3,175.1 186.0,170.5 M185.4,169.6 184.4,168.3 182.3,162.9 M373.9,173.5 372.4,179.4 371.0,188.4 M450.8,346.4 449.7,353.9 452.8,357.5 M466.7,177.8 460.9,172.2 459.9,166.3 M591.5,446.5 599.1,449.6 603.0,454.4 M368.8,132.1 362.4,123.7 354.1,118.1 M422.7,281.5 427.3,271.6 430.1,266.8 M230.7,82.8 241.5,85.6 246.7,83.1 M440.1,288.7 436.9,290.4 428.2,289.9 M84.8,378.1 78.4,382.1 72.4,384.6 M315.0,450.1 309.8,452.6 300.8,450.5 M531.6,261.3 537.0,263.6 542.5,267.9 M573.9,276.3 572.0,268.7 573.9,263.6 M94.8,162.4 88.3,164.3 79.4,171.2 M462.0,-6.2 474.2,-10.8 485.1,-10.0 M559.4,276.6 566.4,280.5 567.9,283.4 M570.0,287.6 570.1,287.8 M299.3,137.3 295.1,145.6 291.6,149.6 M83.3,255.0 81.1,260.0 75.9,269.7 M243.7,262.2 242.5,267.6 239.3,274.4 M58.5,518.1 53.8,519.3 43.3,523.8 M169.3,472.7 172.3,478.1 173.9,483.8 M69.4,410.9 65.6,404.9 61.7,397.2 M11.4,350.0 8.7,359.0 7.0,364.6 M305.1,308.9 313.7,307.5 320.7,309.0 M79.4,171.2 69.9,169.6 63.9,166.1 M124.8,506.3 121.9,510.3 118.4,518.4 M497.3,104.4 495.9,99.6 495.3,89.8 M83.7,463.3 71.8,462.0 60.9,463.1 M216.8,275.2 223.1,270.3 227.9,270.7 M276.1,252.2 271.1,260.0 267.9,262.7 M239.3,381.1 238.6,381.7 M232.0,395.1 231.8,397.2 M518.7,58.6 514.3,63.0 511.8,70.7 M216.7,297.0 220.7,299.9 230.3,302.6 M330.9,304.4 326.5,303.8 320.7,309.0 M100.6,407.6 96.7,405.7 90.1,403.2 M18.8,392.3 18.0,396.7 15.6,404.3 M463.9,198.6 459.8,200.1 454.2,195.6 M486.0,50.3 483.4,52.1 476.1,55.5 M359.1,157.3 354.5,149.7 355.6,143.9 M566.4,175.6 569.1,169.1 568.7,163.7 M518.6,253.6 525.8,258.5 531.6,261.3 M259.1,243.1 266.3,238.8 274.3,237.9 M415.3,333.6 412.8,341.4 407.3,349.7 M-6.1,447.7 -6.5,435.2 -7.2,424.7 M448.1,167.2 454.3,167.4 459.9,166.3 M107.4,143.7 111.1,140.0 110.8,134.0 M532.6,247.6 526.0,252.7 518.6,253.6 M101.6,499.3 106.1,506.5 107.3,510.4 M261.6,158.5 253.9,157.9 250.9,152.2 M322.0,37.9 315.2,34.1 M309.3,31.3 302.1,29.1 M440.1,288.7 447.7,288.4 452.3,292.0 M355.6,143.9 352.9,148.3 348.8,158.1 M163.9,272.5 158.3,277.7 150.6,279.6 M195.7,226.1 204.1,219.8 209.7,213.1 M522.8,13.4 520.8,16.2 515.4,22.5 M297.7,195.6 294.6,200.2 291.8,204.1 M354.9,304.3 345.5,301.1 338.8,292.8 M437.9,146.1 447.6,143.0 452.1,139.3 M567.3,213.3 556.0,212.7 550.5,214.3 M543.1,395.1 539.7,398.6 533.7,401.8 M326.9,61.0 332.8,55.3 336.1,49.0 M153.2,357.7 148.2,354.4 139.7,346.7 M353.2,277.1 361.1,276.3 363.6,275.6 M235.4,-2.8 234.4,4.5 230.4,7.9 M394.6,129.6 395.0,137.4 398.3,139.9 M449.5,118.5 448.4,110.8 452.0,103.7 M84.8,378.1 75.2,377.2 70.6,371.6 M171.1,505.9 167.0,510.4 160.0,520.2 M249.3,484.0 254.9,492.2 262.5,497.9 M52.3,67.4 48.3,58.7 47.6,53.8 M284.1,140.6 286.7,144.5 291.6,149.6 M554.0,245.7 559.6,248.5 565.2,254.3 M227.9,171.9 230.0,169.9 234.6,162.9 M415.0,356.2 415.0,359.2 420.3,365.7 M509.1,245.9 503.4,241.4 501.3,236.9 M228.7,217.9 236.3,221.2 242.1,224.6 M107.3,510.4 107.2,518.5 101.8,526.7 M573.9,276.3 564.3,274.2 559.4,276.6 M204.0,167.0 210.4,158.1 215.7,154.1 M113.4,263.6 122.5,268.9 128.4,271.8 M388.8,365.1 391.3,360.5 396.8,350.3 M520.2,207.5 526.6,202.7 527.4,199.6 M311.4,0.1 303.6,0.5 299.9,1.3 M567.3,213.3 562.3,210.9 559.8,204.8 M394.6,129.6 390.9,120.6 391.8,111.6 M409.1,97.4 410.0,94.1 412.0,87.1 M490.7,287.2 498.4,288.6 507.4,294.6 M344.3,205.0 347.9,204.8 357.2,205.4 M356.0,326.0 348.5,325.0 342.4,325.0 M25.8,412.1 34.1,413.7 39.7,417.0 M416.8,448.2 418.6,445.6 M423.6,439.3 428.3,436.3 M55.5,493.5 48.7,502.4 47.7,512.2 M213.7,527.1 211.1,521.6 206.4,518.2 M61.0,386.3 69.3,382.9 72.4,384.6 M248.6,173.6 248.2,167.2 252.4,164.0 M157.1,241.1 155.7,244.4 157.8,252.4 M297.1,86.4 299.1,94.3 305.2,96.5 M376.9,316.9 381.1,323.1 387.5,324.7 M407.3,349.7 408.6,341.7 405.2,334.3 M205.8,507.9 204.9,503.2 200.7,495.6 M481.5,9.2 491.4,8.1 499.6,6.0 M563.2,225.1 565.9,216.7 567.3,213.3 M354.9,304.3 351.2,309.2 345.9,312.9 M481.5,9.2 485.6,1.2 485.1,-10.0 M146.5,314.9 148.5,321.3 150.7,326.4 M84.8,378.1 85.9,382.6 89.6,390.2 M312.5,43.6 311.8,43.0 M307.7,39.2 305.2,36.9 302.1,29.1 M445.8,86.9 452.9,85.0 462.4,86.4 M434.6,168.4 433.9,176.2 430.5,179.3 M403.2,376.8 406.6,383.6 414.5,384.6 M180.1,183.3 183.8,178.8 189.3,175.1 M570.1,287.8 574.7,295.2 M579.9,302.4 580.2,302.8 M426.6,251.7 430.4,261.3 430.1,266.8 M213.7,527.1 224.9,527.1 234.7,525.5 M90.4,191.2 76.3,195.2 68.1,198.7 M64.1,360.2 64.7,368.3 70.6,371.6 M497.3,104.4 507.2,106.6 519.8,107.1 M604.0,294.1 594.5,286.3 590.4,274.7 M452.8,357.5 445.4,360.9 441.7,369.5 M464.0,278.7 467.1,282.4 472.7,284.0 M335.7,410.0 336.2,423.2 336.1,425.6 M335.7,435.2 335.6,438.9 M527.6,174.9 533.8,177.7 541.1,186.4 M43.3,523.8 37.4,516.9 35.4,514.8 M344.1,15.3 344.1,17.1 M341.4,25.9 338.1,31.6 M-8.3,381.2 -6.8,371.8 -7.1,360.6 M430.2,114.3 437.3,118.0 449.5,118.5 M269.9,8.0 278.0,19.4 282.4,27.6 M75.2,516.8 68.8,519.0 67.2,526.4 M552.8,405.4 558.8,407.1 563.1,403.3 M6.3,398.4 12.3,398.4 15.6,404.3 M549.2,68.4 541.3,74.1 531.3,84.6 M254.5,74.4 249.5,67.5 248.0,61.8 M182.2,330.5 187.1,334.0 189.8,339.3 M66.1,61.2 55.4,59.0 47.6,53.8 M520.0,44.4 516.8,32.7 515.4,22.5 M358.1,288.1 355.7,284.8 M353.2,280.9 353.2,277.1 M522.8,13.4 521.3,1.6 516.7,-4.4 M368.8,132.1 363.1,129.4 357.1,129.3 M556.1,430.4 557.9,437.1 557.9,447.0 M247.4,517.3 255.1,521.3 263.1,523.5 M7.2,141.4 2.0,146.8 -8.3,156.4 M474.1,273.6 477.9,267.5 481.6,260.0 M201.8,271.5 197.9,261.9 199.8,256.6 M254.5,74.4 246.7,82.9 242.3,92.5 M603.3,309.3 597.2,309.2 M586.8,309.1 586.5,309.1 575.6,312.3 M68.1,198.7 65.5,195.6 M58.0,184.5 54.8,178.5 M-8.3,381.2 1.0,382.3 4.7,378.5 M200.7,495.6 196.7,486.6 197.6,482.4 M482.1,202.4 473.4,200.6 463.9,198.6 M269.5,326.9 264.8,332.0 264.6,337.0 M64.1,360.2 61.0,357.6 52.8,355.3 M455.3,47.1 452.4,40.9 450.2,36.7 M563.2,225.1 557.9,232.1 551.1,233.6 M512.3,134.9 510.8,139.1 508.3,145.1 M359.1,157.3 355.1,157.9 348.8,158.1 M126.2,162.5 123.8,166.9 120.2,172.4 M7.2,141.4 2.6,136.9 2.8,129.1 M373.9,173.5 368.8,174.0 366.0,179.7 M300.7,162.9 305.0,156.1 311.0,152.7 M104.2,440.7 108.7,429.3 110.7,423.6 M164.5,299.8 164.5,294.1 160.4,287.3 M450.3,213.7 446.5,220.9 447.6,225.4 M316.4,210.0 317.7,215.3 320.2,219.4 M492.4,358.3 484.6,355.7 479.3,357.3 M93.5,119.2 84.6,115.2 77.7,110.1 M485.5,174.8 494.2,178.6 497.1,180.4 M152.9,490.9 157.5,495.8 162.0,497.7 M495.5,25.5 499.1,15.1 499.6,6.0 M43.8,427.2 35.3,430.1 32.1,428.4 M368.8,132.1 369.3,134.7 374.1,141.3 M94.8,162.4 89.3,156.0 86.0,147.1 M573.9,276.3 571.9,280.7 M570.2,287.4 570.1,287.8 M405.6,68.5 409.4,64.8 417.3,57.7 M477.7,157.8 487.6,159.3 494.7,159.3 M495.4,248.8 500.7,240.1 501.3,236.9 M492.5,391.0 493.6,392.9 M500.2,405.8 500.4,406.4 M559.4,276.6 553.3,280.3 547.5,285.4 M496.9,56.5 493.7,64.8 484.6,69.6 M143.9,272.0 138.8,269.1 128.4,271.8 M455.3,47.1 459.6,51.8 460.9,59.1 M401.2,213.1 402.5,211.1 409.3,205.3 M242.1,396.9 239.3,398.8 231.8,397.2 M132.9,307.4 133.6,313.6 133.7,318.9 M494.4,435.5 485.0,430.0 480.5,422.5 M400.3,404.4 399.7,399.8 401.6,391.3 M25.3,363.0 25.5,355.6 30.6,351.8 M415.3,333.6 408.8,334.1 405.2,334.3 M26.3,153.8 26.4,161.9 28.8,171.4 M516.7,-4.4 524.2,-3.6 531.7,1.4 M267.8,211.6 272.1,213.0 276.0,220.2 M307.2,85.1 305.8,91.4 305.2,96.5 M326.5,322.1 334.6,320.7 342.4,325.0 M497.4,306.6 502.6,303.0 507.4,294.6 M326.5,322.1 322.9,314.2 320.7,309.0 M586.3,395.0 588.6,391.6 587.0,384.0 M414.0,269.4 423.8,267.9 430.1,266.8 M201.0,151.4 193.9,153.6 M184.0,161.1 182.3,162.9 M261.7,189.0 266.5,179.4 269.8,173.9 M539.9,61.6 548.8,67.5 555.8,77.8 M196.4,329.7 197.9,336.2 200.1,340.9 M217.7,263.4 218.1,268.2 216.8,275.2 M160.3,262.6 159.6,259.9 157.8,252.4 M72.7,497.6 65.7,495.3 55.5,493.5 M224.3,247.3 225.5,251.5 232.1,260.8 M541.2,253.5 534.6,254.6 531.6,261.3 M252.8,139.1 246.9,136.4 238.8,132.1 M11.4,350.0 18.3,353.7 30.6,351.8 M-9.7,130.4 -9.4,140.5 -8.6,145.8 M47.7,512.2 43.7,519.0 43.3,523.8 M146.5,314.9 142.7,318.1 133.7,318.9 M488.5,405.5 490.4,413.5 495.1,416.3 M238.9,311.7 239.2,305.5 241.5,300.7 M563.2,225.1 561.5,213.7 559.8,204.8 M34.5,120.4 26.4,124.4 13.7,128.7 M543.6,14.7 535.3,7.0 531.7,1.4 M235.5,406.8 241.5,418.0 244.5,424.3 M511.8,70.7 518.9,79.1 531.3,84.6 M198.5,312.4 195.5,310.2 188.2,313.9 M482.1,202.4 482.8,196.9 483.0,186.6 M485.3,23.7 484.1,19.1 481.5,9.2 M506.5,461.8 503.0,456.2 496.9,453.7 M275.7,102.0 275.6,102.5 M271.1,111.8 270.3,112.6 M433.1,340.9 436.8,334.0 445.1,328.3 M249.3,484.0 242.4,476.2 241.3,463.7 M230.3,302.6 233.0,303.9 241.5,300.7 M393.2,252.2 396.5,254.0 403.9,260.9 M205.8,507.9 207.1,513.4 206.4,518.2 M529.7,452.6 524.1,459.1 518.2,468.0 M591.1,244.5 596.1,251.2 602.4,258.9 M125.4,496.2 134.0,495.6 137.6,494.4 M198.8,196.6 193.8,195.7 184.2,194.1 M227.9,171.9 220.5,171.5 215.0,175.4 M142.6,479.7 149.6,477.9 156.5,474.0 M7.0,409.7 -3.0,416.4 -7.2,424.7 M519.8,107.1 527.7,111.7 533.5,119.0 M437.9,146.1 444.2,151.2 444.9,155.5 M357.2,205.4 354.8,198.5 349.4,195.4 M42.9,471.5 44.6,475.5 M45.3,488.3 45.3,488.6 M477.7,368.9 469.3,368.8 465.3,369.4 M440.1,288.7 438.4,283.2 440.4,278.2 M133.3,252.8 127.2,247.5 116.3,243.4 M124.8,506.3 130.4,509.1 139.4,509.2 M204.2,233.8 207.8,231.4 213.2,227.9 M338.1,192.2 334.2,194.6 326.7,199.9 M107.4,143.7 104.5,148.4 104.9,157.7 M30.3,387.1 33.6,390.0 35.1,398.1 M296.7,230.7 303.5,224.3 305.2,223.1 M124.0,299.7 119.9,306.9 111.5,310.8 M77.7,110.1 74.6,110.1 M69.3,109.0 61.0,104.0 M550.4,387.9 558.1,391.4 567.4,392.4 M336.9,259.6 332.9,261.3 327.8,268.9 M285.2,213.3 288.7,209.7 291.8,204.1 M305.0,284.1 303.3,289.5 304.0,297.6 M439.7,234.4 441.2,227.1 447.6,225.4 M401.6,391.3 392.8,398.4 388.0,410.9 M144.4,255.2 148.3,252.6 157.8,252.4 M462.0,-6.2 456.2,-5.1 450.3,-6.6 M14.6,381.7 14.9,379.0 19.5,371.2 M239.2,116.1 242.8,104.0 242.3,92.5 M468.3,136.6 471.1,141.0 478.7,144.6 M495.4,248.8 499.3,245.1 509.1,245.9 M445.1,328.3 441.6,322.5 436.7,318.4 M286.5,172.9 294.2,178.4 296.7,182.7 M354.9,304.3 357.6,298.3 358.1,288.1 M183.9,263.5 180.6,268.7 177.3,275.1 M331.7,166.7 330.1,159.8 326.8,157.7 M144.6,334.9 140.2,338.4 139.7,346.7 M571.3,382.8 580.8,384.2 587.0,384.0 M324.9,16.9 322.9,12.6 324.7,3.7 M592.8,106.0 579.9,108.2 571.3,113.9 M104.9,157.7 100.8,166.7 98.7,172.3 M495.2,143.2 487.6,146.9 478.7,144.6 M153.2,357.7 158.2,355.6 M161.8,352.0 163.9,348.6 M405.6,68.5 410.2,79.3 412.0,87.1 M578.0,186.4 585.2,194.0 592.1,196.1 M321.0,172.3 325.3,165.1 326.8,157.7 M87.8,181.3 93.9,176.7 98.7,172.3 M215.7,154.1 224.2,159.5 234.6,162.9 M152.9,490.9 160.5,490.2 164.2,487.6 M587.3,136.4 575.5,134.4 569.0,133.8 M185.3,479.5 179.1,484.6 173.9,483.8 M25.3,363.0 21.2,365.8 19.5,371.2 M230.4,7.9 220.9,-2.0 216.7,-6.3 M333.0,230.9 325.7,224.6 320.2,219.4 M34.5,120.4 29.9,111.4 24.5,107.8 M268.4,365.1 282.2,370.6 290.6,372.1 M245.9,326.2 238.8,323.4 235.5,321.2 M398.7,168.6 396.2,173.5 391.0,183.2 M90.4,191.2 87.5,184.6 87.8,181.3 M557.3,102.4 564.6,109.6 571.3,113.9 M514.7,164.1 522.8,163.5 527.3,164.5 M400.3,104.4 400.1,104.5 M391.8,111.3 391.8,111.6 M568.4,235.1 558.9,231.9 551.1,233.6 M150.9,227.7 156.1,225.4 163.9,219.5 M284.5,228.4 279.3,231.9 274.3,237.9 M267.8,211.6 269.9,205.1 273.0,194.4 M32.1,428.4 38.9,435.0 39.9,439.2 M63.9,166.1 63.3,166.8 M56.6,174.8 54.8,178.5 M410.2,179.2 415.9,183.7 417.0,188.8 M185.3,479.5 189.4,482.0 197.6,482.4 M148.6,298.7 149.5,309.7 146.5,314.9 M69.4,410.9 74.5,415.0 75.6,422.3 M78.9,399.2 82.2,397.4 89.6,390.2 M349.7,349.7 352.1,343.0 350.1,334.1 M533.4,272.8 529.9,277.2 531.7,286.0 M586.3,395.0 592.9,398.2 598.6,395.9 M136.3,280.3 144.8,280.4 150.6,279.6 M151.6,511.3 146.1,510.1 139.4,509.2 M116.3,243.4 110.7,241.5 101.0,240.1 M190.2,492.9 196.2,487.3 197.6,482.4 M568.2,86.4 562.5,91.0 557.1,89.8 M377.2,365.5 380.8,370.6 382.5,376.3 M549.2,68.4 549.6,72.6 555.8,77.8 M119.0,360.9 121.6,365.8 127.5,371.7 M243.8,503.0 250.7,512.7 251.5,513.4 M258.7,519.7 263.1,523.5 M229.2,183.9 227.8,179.7 227.9,171.9 M388.4,219.6 392.8,227.4 399.3,232.3 M464.0,278.7 469.6,276.7 474.1,273.6 M89.6,390.2 91.6,399.0 90.1,403.2 M101.8,526.7 93.5,524.4 89.7,524.7 M305.2,223.1 307.3,226.2 315.0,228.3 M80.5,127.6 76.4,117.6 77.7,110.1 M495.4,248.8 490.9,243.5 481.5,239.4 M465.3,369.4 467.3,373.2 470.5,379.6 M410.2,179.2 406.2,173.9 398.7,168.6 M368.3,224.3 360.6,225.6 353.1,222.5 M416.8,448.2 417.5,450.6 422.3,458.8 M391.0,284.8 399.6,286.2 403.5,284.1 M448.2,7.3 456.6,2.4 462.0,-6.2 M552.8,405.4 556.2,407.1 559.4,413.6 M460.4,153.1 450.8,155.6 444.9,155.5 M77.7,110.1 81.3,105.8 89.2,100.3 M132.9,307.4 139.2,313.7 146.5,314.9 M70.6,371.6 73.1,377.3 72.4,384.6 M307.2,241.8 298.9,244.2 295.2,246.0 M307.8,182.7 310.6,185.7 311.8,194.3 M239.6,146.3 239.1,137.1 238.8,132.1 M100.9,370.0 106.2,374.0 113.5,375.0 M55.5,493.5 54.7,492.0 M45.5,488.6 45.3,488.6 M201.0,151.4 207.4,152.8 215.7,154.1 M14.6,381.7 19.3,389.3 18.8,392.3 M484.6,69.6 479.2,64.7 470.3,63.9 M242.1,396.9 240.3,402.9 235.5,406.8 M465.3,369.4 459.6,374.0 459.5,379.5 M7.2,141.4 -0.6,141.8 -8.6,145.8 M39.7,417.0 33.8,422.2 32.1,428.4 M589.1,257.7 592.8,257.3 602.4,258.9 M2.8,129.1 5.4,124.1 M7.5,120.7 10.2,117.2 M315.9,392.1 315.5,386.2 314.8,375.6 M187.1,349.2 188.2,343.5 189.8,339.3 M497.3,104.4 488.8,107.0 478.1,105.1 M502.5,203.1 509.1,207.2 520.2,207.5 M585.4,410.9 589.2,421.4 588.2,426.9 M132.2,223.3 126.6,231.0 124.6,234.0 M320.2,219.4 316.6,223.0 315.0,228.3 M153.2,357.7 146.4,364.0 142.1,366.7 M541.2,253.5 537.7,248.4 532.6,247.6 M238.9,311.7 236.1,316.9 235.5,321.2 M276.4,279.3 283.7,282.6 287.1,284.6 M554.4,132.5 549.0,128.6 541.6,127.0 M67.3,262.8 65.1,260.9 58.6,257.5 M519.8,107.1 517.5,97.6 513.9,90.8 M119.0,360.9 114.5,355.9 109.1,353.0 M7.0,409.7 10.7,409.7 15.6,404.3 M409.1,97.4 409.2,101.9 410.0,110.2 M213.7,527.1 204.9,523.9 197.3,523.9 M250.0,279.0 258.4,278.0 264.2,280.6 M285.6,189.1 292.4,185.7 296.7,182.7 M410.2,179.2 405.2,185.4 401.3,190.7 M299.3,137.3 294.5,139.5 284.1,140.6 M270.8,288.9 265.8,283.7 264.2,280.6 M375.4,329.4 374.0,324.0 376.9,316.9 M442.6,21.9 442.2,21.9 M427.6,23.3 418.2,26.5 M308.4,252.3 300.4,246.9 295.2,246.0 M422.3,83.9 417.3,87.5 412.0,87.1 M300.7,162.9 294.0,158.3 291.6,149.6 M450.6,249.1 449.4,256.1 449.4,262.6 M297.1,86.4 292.4,89.3 M285.9,87.6 285.7,87.5 M75.7,94.3 72.1,96.4 63.2,92.7 M199.1,179.1 194.7,179.8 189.3,175.1 M439.7,234.4 436.8,229.0 430.5,222.7 M503.0,316.2 510.3,311.8 516.6,309.7 M311.4,0.1 316.0,1.6 324.7,3.7 M239.2,116.1 238.9,117.1 M237.8,123.5 238.8,132.1 M379.5,244.3 379.4,237.9 374.1,235.0 M579.2,228.3 588.4,227.5 592.1,226.7 M405.7,129.6 410.3,130.1 417.8,131.8 M366.0,179.7 366.1,184.3 371.0,188.4 M430.1,266.8 433.6,257.3 439.3,253.8 M520.2,207.5 525.5,209.2 534.2,211.9 M149.2,217.1 143.2,218.5 132.2,223.3 M209.7,213.1 205.8,214.3 197.9,216.2 M148.6,298.7 155.7,298.6 164.5,299.8 M260.6,226.9 259.9,233.9 259.1,243.1 M335.7,410.0 334.3,402.2 331.7,391.3 M249.3,484.0 252.7,477.3 251.5,471.6 M422.7,281.5 425.9,283.6 428.2,289.9 M254.5,74.4 254.9,70.3 M255.8,58.5 256.4,47.1 M150.9,227.7 152.1,231.9 157.1,241.1 M445.1,328.3 447.6,325.1 456.0,324.9 M550.5,214.3 541.6,213.4 534.2,211.9 M270.8,288.9 272.9,287.0 276.4,279.3 M452.8,357.5 446.7,357.3 439.9,352.5 M307.2,241.8 310.5,238.5 317.1,238.3 M110.8,134.0 103.5,130.6 95.6,133.2 M127.1,330.1 125.6,336.3 121.7,344.6 M261.4,348.3 264.3,342.7 264.6,337.0 M232.1,260.8 232.1,264.0 227.9,270.7 M190.4,204.7 197.2,203.5 198.8,196.6 M409.2,313.9 404.1,309.0 400.0,303.2 M291.4,256.4 293.7,259.1 302.0,261.2 M235.4,-2.8 225.6,-2.9 216.7,-6.3 M124.0,299.7 120.1,300.7 113.3,299.2 M142.6,479.7 150.7,482.4 152.9,490.9 M-2.7,181.1 -2.2,175.3 0.2,168.0 M58.5,518.1 55.6,514.1 47.7,512.2 M126.2,162.5 130.2,169.4 130.8,172.6 M88.4,415.9 92.7,422.5 97.0,426.8 M459.2,335.0 465.1,339.0 468.1,341.0 M495.3,89.8 506.7,87.7 513.9,90.8 M359.1,-4.3 353.6,2.8 344.1,15.3 M2.8,129.1 -2.9,128.9 -9.7,130.4 M206.4,518.2 202.0,523.1 197.3,523.9 M87.8,181.3 82.3,176.3 79.4,171.2 M450.6,249.1 446.5,251.7 439.3,253.8 M133.4,239.8 125.2,242.3 116.3,243.4 M299.4,380.0 302.7,367.6 300.3,360.3 M34.5,498.6 34.5,508.6 35.4,514.8 M125.4,496.2 116.9,496.5 113.8,493.5 M468.9,238.4 471.6,242.3 476.0,250.0 M516.6,309.7 513.6,303.3 507.4,294.6 M418.2,303.4 420.6,309.9 420.2,313.4 M590.8,457.9 598.4,459.1 603.0,454.4 M414.9,409.8 415.3,412.5 411.5,420.4 M560.6,462.5 556.8,455.6 557.9,447.0 M83.3,255.0 87.6,259.9 93.9,266.7 M27.2,135.7 23.0,130.6 13.7,128.7 M10.9,173.2 13.9,173.9 M27.0,172.1 28.8,171.4 M103.3,258.1 103.2,249.7 101.0,240.1 M554.0,245.7 550.7,241.5 551.1,233.6 M75.7,94.3 67.8,101.9 61.0,104.0 M307.7,270.4 304.1,265.1 302.0,261.2 M7.2,141.4 9.9,137.5 13.7,128.7 M445.0,129.7 448.7,124.8 449.5,118.5 M394.6,129.6 397.4,127.5 405.7,129.6 M536.1,414.4 533.9,409.4 533.7,401.8 M285.7,87.5 285.9,87.6 M292.9,90.5 294.5,91.2 305.2,96.5 M477.7,368.9 484.6,360.7 492.4,358.3 M229.9,291.0 237.6,294.7 241.5,300.7 M539.9,61.6 532.0,62.5 518.7,58.6 M459.5,229.7 454.0,228.1 447.6,225.4 M248.5,125.3 244.9,126.1 238.8,132.1 M533.4,272.8 535.5,267.7 531.6,261.3 M474.1,273.6 473.7,280.0 472.7,284.0 M49.2,368.8 51.5,364.0 52.8,355.3 M90.4,191.2 85.0,191.5 79.4,194.0 M270.8,288.9 277.7,291.9 288.6,297.4 M58.8,28.1 52.5,39.9 47.6,53.8 M533.4,272.8 538.3,271.1 542.5,267.9 M261.4,348.3 259.5,349.7 M243.4,363.4 242.9,364.0 M308.4,252.3 313.9,248.3 317.1,238.3 M25.8,412.1 28.6,402.5 35.1,398.1 M249.3,484.0 251.0,490.8 250.3,494.2 M171.1,505.9 172.1,512.2 170.2,520.4 M430.7,206.4 428.1,213.7 430.5,222.7 M315.9,392.1 325.8,390.0 331.7,391.3 M75.7,94.3 79.7,89.3 81.7,86.2 M14.1,158.5 9.6,160.4 0.2,168.0 M453.8,278.9 447.7,277.3 440.4,278.2 M245.9,326.2 252.4,322.2 256.1,317.7 M439.9,352.5 440.3,363.9 441.7,369.5 M113.3,299.2 115.2,292.3 117.7,283.5 M249.3,290.3 246.2,294.4 241.5,300.7 M525.6,217.7 530.4,217.5 534.2,211.9 M57.8,424.0 60.3,417.8 57.0,412.4 M242.1,396.9 244.0,411.7 244.5,424.3 M27.2,135.7 24.4,143.4 26.3,153.8 M317.1,238.3 316.5,235.5 315.0,228.3 M242.9,364.0 240.7,374.4 239.3,381.1 M602.7,221.3 597.8,210.7 592.1,196.1 M344.1,15.3 349.3,8.2 349.3,3.1 M495.5,25.5 504.8,21.3 515.4,22.5 M455.3,47.1 467.5,51.4 476.1,55.5 M25.0,438.7 30.8,431.2 32.1,428.4 M583.7,97.0 577.2,107.4 571.3,113.9 M543.6,14.7 551.4,17.0 562.8,18.8 M487.6,114.2 488.2,121.0 484.3,124.5 M462.4,86.4 465.7,88.3 472.4,90.8 M269.8,173.9 277.4,173.0 286.5,172.9 M71.4,434.6 62.1,431.7 57.8,424.0 M496.9,453.7 504.7,453.9 511.7,449.8 M521.8,233.4 516.4,237.1 509.1,245.9 M287.2,346.6 292.9,351.4 300.3,360.3 M600.8,151.3 592.9,145.5 587.3,136.4 M459.2,335.0 459.2,327.0 456.0,324.9 M407.8,221.8 410.1,210.7 409.3,205.3 M519.4,268.5 522.6,267.4 531.6,261.3 M554.4,132.5 550.4,124.6 551.4,115.3 M541.6,127.0 548.3,118.5 551.4,115.3 M242.1,224.6 247.1,216.4 248.1,210.0 M10.6,526.8 25.1,522.5 35.4,514.8 M415.0,356.2 411.0,353.6 407.3,349.7 M65.4,450.1 62.7,454.2 60.9,463.1 M113.4,263.6 108.9,261.5 103.3,258.1 M142.1,366.7 144.6,371.7 152.3,377.0 M284.1,360.6 284.1,353.0 287.2,346.6 M90.5,366.9 96.4,367.1 100.9,370.0 M430.7,206.4 423.8,206.2 418.7,211.6 M285.6,189.1 280.6,193.5 273.0,194.4 M18.6,455.3 27.7,456.2 30.9,457.6 M115.9,163.0 117.4,166.9 120.2,172.4 M302.4,211.2 297.8,208.1 291.8,204.1 M573.9,276.3 576.5,277.2 M582.4,279.3 582.8,279.5 596.8,283.2 M75.2,516.8 85.0,519.6 89.7,524.7 M243.7,262.2 245.7,258.7 246.3,249.5 M495.1,416.3 485.5,422.1 480.5,422.5 M14.6,381.7 8.7,380.2 4.7,378.5 M400.3,404.4 406.4,405.9 414.9,409.8 M51.3,43.0 49.1,49.4 47.6,53.8 M93.5,119.2 102.6,124.1 110.8,134.0 M81.7,86.2 86.8,93.0 89.2,100.3 M210.3,469.2 218.4,472.3 231.5,476.8 M288.6,297.4 298.9,298.8 304.0,297.6 M195.7,226.1 199.3,220.0 197.9,216.2 M85.6,136.9 88.4,132.4 95.6,133.2 M199.8,256.6 204.9,253.7 213.4,246.2 M401.6,118.9 393.9,116.4 391.8,111.6 M80.5,127.6 80.3,129.3 85.6,136.9 M349.5,235.6 344.0,234.8 333.0,230.9 M445.0,129.7 450.8,133.1 452.1,139.3 M69.4,410.9 72.0,407.0 78.9,399.2 M400.0,303.2 393.5,297.9 383.7,295.5 M366.1,264.0 366.1,270.5 363.6,275.6 M527.6,174.9 524.7,172.6 527.3,164.5 M539.7,167.0 538.8,160.7 541.9,152.9 M199.8,256.6 193.3,254.0 189.0,251.7 M536.9,221.6 537.3,214.5 534.2,211.9 M384.6,346.0 379.1,348.8 376.2,352.5 M79.4,171.2 74.7,163.8 72.2,154.6 M142.1,366.7 136.9,371.2 127.5,371.7 M464.5,319.1 469.6,325.0 473.2,330.3 M198.5,312.4 205.9,313.8 211.3,317.8 M331.7,166.7 336.3,160.6 338.6,158.4 M233.1,501.3 241.0,503.7 243.8,503.0 M602.8,432.7 597.0,429.6 588.2,426.9 M527.3,164.5 535.2,158.4 541.9,152.9 M121.7,344.6 116.4,346.3 109.1,353.0 M443.6,392.9 448.5,389.6 453.4,387.5 M577.1,469.3 576.7,471.7 M570.2,492.7 569.5,494.4 M357.1,129.3 352.2,128.8 342.9,122.8 M270.3,112.6 278.3,116.8 M285.3,124.4 286.9,126.9 M342.7,274.7 346.8,273.8 353.2,277.1 M464.2,265.2 470.9,270.7 474.1,273.6 M437.9,146.1 430.4,143.1 426.3,137.7 M449.8,306.2 441.8,314.0 436.7,318.4 M75.7,94.3 74.1,104.5 77.7,110.1 M468.1,341.0 466.8,349.2 466.5,352.7 M84.8,378.1 87.8,370.3 90.5,366.9 M527.6,174.9 522.7,170.8 514.7,164.1 M190.5,273.0 184.4,266.1 183.9,263.5 M183.8,516.6 188.4,519.7 197.3,523.9 M362.9,195.7 366.0,203.8 368.4,210.8 M518.6,253.6 521.5,260.9 519.4,268.5 M433.1,340.9 428.3,342.5 423.0,341.8 M468.9,238.4 466.9,236.6 459.5,229.7 M141.7,382.9 142.1,374.1 142.1,366.7 M299.3,137.3 295.5,128.3 296.5,123.4 M368.3,224.3 366.5,217.3 368.4,210.8 M284.1,360.6 288.0,363.9 290.6,372.1 M515.2,416.5 518.8,422.8 522.2,424.7 M297.4,50.9 302.5,63.0 302.9,70.8 M449.8,306.2 453.0,298.9 452.3,292.0 M96.5,516.7 99.1,519.2 101.8,526.7 M557.3,102.4 560.0,95.6 557.1,89.8 M98.7,172.3 102.4,179.5 112.0,182.3 M429.5,189.5 436.9,188.2 441.5,184.9 M0.2,168.0 -5.7,159.6 -8.3,156.4 M342.9,122.8 349.0,118.7 354.1,118.1 M495.5,25.5 496.8,32.7 497.7,37.4 M43.8,427.2 41.1,435.1 39.9,439.2 M407.8,221.8 413.8,231.4 415.3,235.2 M82.0,358.7 85.8,355.0 95.1,351.6 M7.0,364.6 14.7,367.0 19.5,371.2 M485.3,23.7 485.3,23.6 M490.3,22.7 491.8,22.4 495.5,25.5 M222.0,505.4 217.3,502.4 212.5,493.4 M396.8,350.3 390.0,345.6 384.6,346.0 M368.8,338.4 377.0,340.2 384.6,346.0 M198.5,312.4 199.5,308.8 200.4,300.5 M450.6,249.1 457.9,248.2 459.7,244.9 M224.3,247.3 220.0,246.3 213.4,246.2 M327.2,380.0 321.9,378.0 314.8,375.6 M163.9,272.5 161.6,266.5 160.3,262.6 M368.8,132.1 372.5,125.9 376.6,125.5 M307.2,241.8 309.2,247.7 308.4,252.3 M407.8,221.8 412.3,218.1 418.7,211.6 M450.8,346.4 456.4,340.5 459.2,335.0 M250.0,279.0 244.9,274.2 239.3,274.4 M377.2,365.5 380.3,367.2 388.8,365.1 M585.4,410.9 584.6,404.3 586.3,395.0 M198.0,4.1 204.5,5.1 212.2,2.9 M577.1,469.3 570.8,469.3 560.2,474.4 M80.5,127.6 86.0,130.1 95.6,133.2 M69.4,410.9 60.8,408.7 57.0,412.4 M570.2,415.3 564.3,412.0 559.4,413.6 M512.3,134.9 506.3,141.0 495.2,143.2 M463.1,104.2 464.9,98.2 472.4,90.8 M262.5,497.9 257.7,493.6 250.3,494.2 M466.7,177.8 472.0,180.5 483.0,186.6 M198.8,196.6 207.2,189.4 212.5,186.9 M190.4,204.7 192.0,211.8 197.9,216.2 M460.9,59.1 465.4,61.7 470.3,63.9 M113.3,299.2 102.6,293.0 96.6,291.3 M89.6,390.2 93.6,388.1 99.1,385.9 M557.3,102.4 553.8,110.8 551.4,115.3 M573.9,263.6 570.9,260.3 565.2,254.3 M344.3,205.0 347.8,199.2 349.4,195.4 M13.7,128.7 12.5,121.3 10.2,117.2 M107.3,510.4 104.4,512.9 96.5,516.7 M554.4,132.5 548.9,144.1 541.9,152.9 M164.2,487.6 170.3,483.5 173.9,483.8 M151.6,511.3 142.4,515.4 138.7,522.1 M249.3,290.3 256.6,293.2 263.5,298.2 M331.7,166.7 332.1,174.8 335.3,179.9 M415.3,333.6 416.9,335.8 423.0,341.8 M260.6,226.9 258.9,219.2 257.7,216.1 M58.2,202.3 58.3,198.5 M56.3,183.7 54.8,178.5 M105.5,281.0 103.5,284.9 96.6,291.3 M342.7,274.7 335.4,271.7 327.8,268.9 M231.8,397.2 235.7,401.4 235.5,406.8 M117.7,283.5 107.9,290.2 96.6,291.3 M103.3,258.1 98.3,259.9 93.9,266.7 M349.5,235.6 349.7,243.4 347.4,253.9 M409.3,365.8 413.0,364.0 415.0,356.2 M146.5,314.9 157.3,311.7 163.2,312.8 M366.3,357.0 368.8,357.4 376.2,352.5 M195.7,226.1 199.1,228.6 204.2,233.8 M252.8,139.1 252.0,144.3 250.9,152.2 M510.5,430.1 517.0,432.3 522.5,437.7 M141.7,382.9 137.7,384.5 130.3,381.4 M379.5,244.3 375.1,247.4 366.8,245.1 M213.7,527.1 219.4,521.5 228.1,517.6 M445.1,328.3 451.7,329.1 459.2,335.0 M594.8,417.3 598.9,422.9 602.8,432.7 M253.0,267.4 253.7,271.2 250.0,279.0 M407.8,221.8 402.9,215.6 401.2,213.1 M189.8,339.3 196.2,340.1 200.1,340.9 M-2.7,181.1 -6.7,169.2 -8.3,156.4 M377.2,365.5 372.2,363.6 366.3,357.0 M560.2,474.4 561.0,477.9 M568.6,493.1 569.5,494.4 M171.1,505.9 176.0,509.3 183.8,516.6 M208.3,20.7 212.9,13.5 212.2,2.9 M358.1,288.1 359.7,295.4 364.5,299.0 M86.0,147.1 77.2,148.9 72.2,154.6 M520.7,188.7 522.6,196.8 527.4,199.6 M482.1,202.4 485.0,212.5 483.3,219.7 M545.1,419.1 551.0,418.7 559.4,413.6 M464.5,319.1 461.1,319.9 456.0,324.9 M571.3,382.8 571.9,387.1 567.4,392.4 M578.0,186.4 575.6,172.1 568.7,163.7 M247.4,517.3 243.6,519.9 234.7,525.5 M230.4,7.9 239.0,6.7 243.2,4.8 M496.9,56.5 488.6,52.8 486.0,50.3 M252.8,139.1 246.0,145.2 239.6,146.3 M366.1,264.0 367.7,252.1 366.8,245.1 M479.3,357.3 472.3,357.9 466.5,352.7 M533.5,119.0 538.9,122.7 541.6,127.0 M492.5,391.0 483.8,391.8 478.1,387.4 M448.1,167.2 444.4,160.7 444.9,155.5 M137.6,494.4 138.3,502.4 139.4,509.2 M379.5,244.3 388.4,249.7 393.2,252.2 M315.0,450.1 323.1,447.3 M331.3,442.2 335.6,438.9 M342.7,274.7 346.5,263.1 347.4,253.9 M575.6,312.3 575.6,310.0 580.2,302.8 M30.9,457.6 38.3,462.8 42.9,471.5 M116.8,200.5 125.0,196.0 132.7,192.5 M342.7,274.7 339.6,281.4 338.8,292.8 M164.2,487.6 164.5,491.2 162.0,497.7 M560.2,474.4 559.0,477.3 M555.8,496.7 555.9,499.2 M89.7,524.7 77.7,527.7 M76.9,527.7 67.2,526.4 M25.8,412.1 19.0,405.5 15.6,404.3 M342.3,138.4 345.4,130.6 342.9,122.8 M470.5,379.6 463.6,381.5 459.5,379.5 M49.2,368.8 56.5,363.8 64.1,360.2 M201.0,151.4 202.4,159.9 204.0,167.0 M443.6,392.9 432.6,391.6 427.6,384.8 M326.9,61.0 319.4,52.9 312.5,43.6 M473.8,126.4 480.9,126.3 484.3,124.5 M262.5,497.9 259.8,493.2 262.8,486.3 M573.9,263.6 573.5,257.2 575.0,250.6 M400.3,104.4 406.8,104.9 410.0,110.2 M450.3,213.7 450.1,203.0 454.2,195.6 M261.7,189.0 270.3,192.1 273.0,194.4 M243.2,4.8 254.5,0.2 256.8,-1.4 M262.9,-5.9 265.1,-7.5 M518.9,402.0 528.9,404.8 533.7,401.8 M222.1,27.3 225.5,26.0 232.1,18.6 M109.1,353.0 112.4,347.2 109.7,342.1 M390.9,268.9 389.1,261.8 393.2,252.2 M333.0,230.9 323.3,231.9 317.1,238.3 M34.5,498.6 41.1,507.8 47.7,512.2 M190.5,273.0 193.7,272.5 201.8,271.5 M327.2,380.0 331.5,385.9 331.7,391.3 M153.3,340.6 149.1,346.1 139.7,346.7 M369.6,154.3 369.4,146.3 374.1,141.3 M525.0,413.9 521.4,413.2 515.2,416.5 M357.1,129.3 355.6,124.4 354.1,118.1 M504.9,166.2 497.3,162.0 494.7,159.3 M231.5,476.8 229.8,485.4 223.5,488.1 M432.6,396.1 430.0,387.9 427.6,384.8 M591.1,244.5 589.5,232.9 592.1,226.7 M525.1,33.7 521.3,29.5 515.4,22.5 M163.9,272.5 167.9,266.7 172.9,259.6 M550.4,387.9 558.8,383.8 561.3,382.4 M349.7,349.7 358.2,353.7 366.3,357.0 M409.1,97.4 414.1,88.8 422.3,83.9 M65.4,450.1 61.6,446.6 54.4,443.0 M357.1,129.3 358.9,135.6 355.6,143.9 M230.7,82.8 235.7,88.9 242.3,92.5 M305.1,308.9 306.3,303.9 304.0,297.6 M405.6,68.5 414.5,70.1 417.6,69.3 M592.1,226.7 597.2,223.1 602.7,221.3 M388.4,219.6 392.7,211.4 391.6,202.9 M52.3,67.4 60.3,61.3 66.1,61.2 M368.3,224.3 371.4,229.6 374.1,235.0 M345.9,312.9 346.4,317.4 342.4,325.0 M488.5,405.5 485.1,415.1 482.6,419.0 M481.4,421.1 480.5,422.5 M284.9,244.0 281.2,242.1 274.3,237.9 M324.9,16.9 334.5,14.3 344.1,15.3 M401.1,414.9 406.3,412.9 414.9,409.8 M359.1,-4.3 346.1,-4.0 339.0,-5.2 M331.7,391.3 329.1,395.7 322.8,403.6 M297.7,195.6 292.6,190.5 285.6,189.1 M291.4,256.4 295.4,263.4 293.8,268.2 M266.0,135.6 277.6,136.8 284.1,140.6 M119.0,360.9 113.5,369.1 113.5,375.0 M78.6,53.8 75.6,65.0 68.0,71.9 M459.5,229.7 466.6,223.3 468.4,220.9 M464.1,75.9 462.6,84.1 462.4,86.4 M542.8,445.5 550.9,449.0 557.9,447.0 M213.0,339.5 209.6,332.2 207.6,328.9 M208.3,20.7 216.3,25.5 222.1,27.3 M216.7,297.0 225.0,295.6 229.9,291.0 M249.4,308.0 248.4,306.9 241.5,300.7 M217.7,263.4 224.0,266.1 227.9,270.7 M440.1,288.7 437.4,291.4 434.9,299.1 M443.6,392.9 437.6,393.6 432.6,396.1 M83.3,255.0 91.3,249.4 91.4,249.3 M97.2,243.7 101.0,240.1 M498.9,77.5 489.2,73.0 484.6,69.6 M299.9,1.3 311.4,1.5 324.7,3.7 M173.6,320.4 182.0,317.6 188.2,313.9 M132.9,307.4 130.8,305.1 124.0,299.7 M25.3,363.0 33.9,365.3 39.3,362.9 M472.4,116.2 481.0,120.9 484.3,124.5 M198.2,289.8 201.6,283.6 208.1,280.7 M385.7,145.1 392.8,143.3 398.3,139.9 M156.5,474.0 161.1,476.3 169.3,472.7 M452.1,139.3 456.7,143.2 460.4,153.1 M420.3,365.7 424.8,367.0 432.1,366.7 M180.1,183.3 180.8,189.3 184.2,194.1 M90.5,366.9 93.2,362.0 95.1,351.6 M211.3,317.8 212.7,319.7 219.9,327.4 M7.0,409.7 5.3,406.0 6.3,398.4 M88.4,415.9 81.3,418.6 75.6,422.3 M115.9,163.0 125.4,170.6 130.8,172.6 M425.8,232.3 430.1,229.7 430.5,222.7 M598.3,384.6 592.9,383.9 587.0,384.0 M496.9,56.5 496.7,44.5 497.7,37.4 M130.3,381.4 128.4,373.7 127.5,371.7 M239.6,146.3 245.1,148.7 250.9,152.2 M442.6,21.9 443.5,8.0 450.3,-6.6 M72.2,154.6 67.3,160.9 63.9,166.1 M297.4,50.9 292.2,41.7 282.4,27.6 M437.8,101.2 444.1,102.9 452.0,103.7 M88.4,415.9 92.0,412.5 90.1,403.2 M328.2,210.0 326.1,203.6 326.7,199.9 M248.6,173.6 239.6,171.0 234.6,162.9 M163.9,272.5 162.3,278.3 160.4,287.3 M230.4,7.9 228.4,19.9 222.1,27.3 M182.2,330.5 183.9,322.7 188.2,313.9 M478.1,387.4 473.5,385.5 470.5,379.6 M104.3,197.8 110.8,192.5 112.0,182.3 M256.1,317.7 262.3,310.3 271.4,308.3 M430.5,222.7 422.9,217.4 418.7,211.6 M583.7,97.0 589.7,101.6 592.8,106.0 M492.8,224.2 490.3,221.2 483.3,219.7 M474.1,273.6 480.8,275.0 487.3,276.7 M78.6,53.8 74.3,58.0 66.1,61.2 M198.2,289.8 199.1,294.4 199.5,296.4 M199.7,297.5 200.4,300.5 M113.1,396.6 116.1,385.5 113.5,375.0 M90.4,191.2 94.5,196.9 104.3,197.8 M430.0,128.1 440.4,130.3 445.0,129.7 M253.0,267.4 259.6,266.0 267.9,262.7 M246.7,83.1 245.1,70.4 248.0,61.8 M316.4,210.0 320.6,203.4 326.7,199.9 M238.5,178.4 233.8,182.4 229.2,183.9 M476.1,55.5 473.7,59.3 470.3,63.9 M338.1,192.2 338.7,185.1 335.3,179.9 M315.4,296.1 308.2,304.7 305.1,308.9 M299.3,137.3 293.1,129.6 286.9,126.9 M485.3,23.7 481.4,22.9 475.4,27.4 M338.1,192.2 345.6,193.3 349.4,195.4 M68.0,71.9 67.5,68.1 66.1,61.2 M235.4,-2.8 240.2,3.7 243.2,4.8 M602.8,432.7 602.0,441.8 603.0,454.4 M133.3,252.8 134.9,249.0 133.4,239.8 M-6.1,447.7 -3.3,450.8 -2.0,458.1 M216.8,275.2 212.8,276.3 208.1,280.7 M366.1,264.0 373.4,271.6 381.2,274.4 M113.4,263.6 107.9,275.1 105.5,281.0 M527.3,164.5 534.4,166.4 539.7,167.0 M533.5,119.0 540.4,116.6 551.4,115.3 M-7.1,360.6 0.1,359.0 2.5,355.5 M602.7,221.3 600.4,219.4 593.2,214.2 M18.6,455.3 18.5,448.7 13.4,444.3 M390.9,268.9 384.7,269.4 381.2,274.4 M453.8,278.9 450.8,286.7 452.3,292.0 M495.2,143.2 494.3,149.4 494.7,159.3 M182.2,330.5 183.4,338.4 187.1,349.2 M125.4,496.2 126.7,489.9 129.5,483.0 M232.1,260.8 240.7,261.6 243.7,262.2 M571.3,113.9 564.2,116.2 551.4,115.3 M510.5,430.1 513.2,423.5 515.2,416.5 M285.6,-3.4 275.7,2.5 269.9,8.0 M430.1,266.8 434.1,269.5 440.4,278.2 M173.6,320.4 167.7,314.0 163.2,312.8 M405.6,151.9 411.1,153.2 416.7,154.7 M532.6,247.6 525.0,243.0 521.8,233.4 M105.5,281.0 99.4,272.9 93.9,266.7 M549.1,-4.2 547.1,2.9 543.6,14.7 M229.9,291.0 229.7,297.1 230.3,302.6 M222.5,192.6 223.7,186.0 229.2,183.9 M100.9,370.0 97.9,380.1 99.1,385.9 M189.0,251.7 190.6,246.2 190.5,236.4 M242.1,396.9 241.5,391.0 M239.8,383.0 239.3,381.1 M338.6,158.4 343.4,157.2 348.8,158.1 M422.7,281.5 413.1,280.8 403.5,284.1 M316.4,210.0 312.1,210.4 302.4,211.2 M520.2,288.4 519.6,296.9 522.3,301.1 M405.6,151.9 404.4,144.0 398.3,139.9 M251.5,471.6 248.7,470.1 241.3,463.7 M164.7,199.1 164.6,208.3 163.9,219.5 M417.3,57.7 420.4,60.0 429.3,60.5 M531.7,286.0 537.0,287.4 M543.0,287.0 547.5,285.4 M182.8,288.5 181.0,284.0 177.3,275.1 M464.1,75.9 469.4,84.6 472.4,90.8 M409.3,365.8 417.5,365.1 420.3,365.7 M143.9,272.0 150.2,276.3 150.6,279.6 M488.5,405.5 492.9,408.0 500.4,406.4 M75.9,269.7 86.5,266.7 93.9,266.7 M479.3,357.3 486.4,348.8 493.9,344.3 M525.1,33.7 525.5,25.0 522.8,13.4 M429.5,189.5 431.1,182.8 430.5,179.3 M253.1,335.4 256.6,336.5 264.6,337.0 M307.7,270.4 306.1,275.7 305.0,284.1 M492.8,224.2 499.5,231.4 501.3,236.9 M288.6,297.4 287.3,292.2 287.1,284.6 M603.3,309.3 601.8,303.3 604.0,294.1 M339.0,-5.2 341.9,-0.6 349.3,3.1 M7.0,364.6 6.7,370.9 4.7,378.5 M293.8,268.2 303.6,272.2 307.7,270.4 M61.0,386.3 55.4,389.7 48.3,396.8 M104.2,440.7 97.0,447.6 93.1,450.8 M464.1,75.9 466.4,69.2 470.3,63.9 M238.5,178.4 233.3,174.1 227.9,171.9 M376.6,125.5 383.3,126.5 394.6,129.6 M297.1,86.4 299.2,77.6 302.9,70.8 M356.0,326.0 350.3,331.8 350.1,334.1 M342.3,138.4 351.3,139.0 355.6,143.9 M185.3,479.5 189.2,487.4 190.2,492.9 M299.9,1.3 298.1,1.1 M293.5,0.4 285.6,-3.4 M507.4,294.6 514.1,296.9 522.3,301.1 M485.5,174.8 486.2,182.1 483.0,186.6 M87.8,181.3 83.3,187.4 79.4,194.0 M215.8,479.3 220.3,481.5 223.5,488.1 M539.9,61.6 542.3,65.5 549.2,68.4 M496.6,332.3 500.3,325.7 503.0,316.2 M153.2,357.7 150.2,369.0 152.3,377.0 M204.0,167.0 198.9,171.8 199.1,179.1 M109.7,342.1 103.9,329.3 104.0,320.5 M598.3,384.6 599.3,391.7 598.6,395.9 M115.9,163.0 123.3,165.0 126.2,162.5 M401.6,118.9 406.0,122.5 405.7,129.6 M497.4,306.6 500.4,309.5 503.0,316.2 M153.3,340.6 161.9,337.2 168.6,336.8 M490.7,287.2 484.1,287.4 472.7,284.0 M208.3,20.7 204.8,15.0 198.0,4.1 M327.8,336.4 325.8,331.7 326.5,322.1 M466.6,21.2 474.5,17.3 481.5,9.2 M330.9,304.4 336.1,298.9 338.8,292.8 M496.6,332.3 492.5,340.7 493.9,344.3 M30.3,387.1 25.4,387.9 18.8,392.3 M25.0,438.7 32.5,438.3 39.9,439.2 M494.4,435.5 505.1,431.7 510.5,430.1 M439.9,352.5 433.2,362.6 432.1,366.7 M450.2,36.7 449.0,29.7 M442.9,22.2 442.6,21.9 M356.7,172.5 353.7,162.9 348.8,158.1 M485.5,174.8 492.2,166.5 494.7,159.3 M120.2,172.4 114.5,178.0 112.0,182.3 M90.5,366.9 88.3,363.5 82.0,358.7 M153.3,340.6 156.2,345.5 163.9,348.6 M498.9,77.5 496.3,86.0 495.3,89.8 M482.5,310.0 481.5,307.9 475.6,302.0 M231.5,476.8 237.1,472.1 241.3,463.7 M409.1,97.4 403.8,101.7 400.3,104.4 M349.7,349.7 346.6,344.1 337.8,342.9 M83.7,463.3 90.0,457.6 93.1,450.8 M405.2,334.3 398.3,344.0 396.8,350.3 M481.5,239.4 480.1,243.0 476.0,250.0 M464.5,319.1 464.8,328.3 459.2,335.0 M331.7,166.7 328.0,169.5 321.0,172.3 M400.3,404.4 392.1,406.3 388.0,410.9 M344.3,205.0 343.0,200.9 338.1,192.2 M230.9,206.2 237.7,204.6 246.6,199.1 M18.6,455.3 19.6,446.0 25.0,438.7 M144.6,334.9 150.6,338.9 153.3,340.6 M266.0,135.6 257.4,140.2 252.8,139.1 M492.5,391.0 492.2,393.2 M488.7,405.2 488.5,405.5 M330.9,304.4 341.3,310.6 345.9,312.9 M-7.3,405.0 -6.7,413.7 -7.2,424.7 M230.9,206.2 226.0,201.6 222.5,192.6 M492.4,358.3 492.8,357.9 M495.3,350.4 493.9,344.3 M542.8,445.5 544.7,450.8 545.2,458.3 M532.6,247.6 532.1,255.8 531.6,261.3 M72.7,497.6 77.4,502.8 86.1,506.5 M407.3,349.7 399.3,348.9 396.8,350.3 M190.4,204.7 184.3,213.7 178.0,217.7 M570.1,287.8 569.7,287.8 M566.6,287.6 566.2,287.6 558.1,287.0 M320.0,278.8 322.2,273.8 327.8,268.9 M58.6,257.5 62.0,255.7 68.3,248.1 M67.3,262.8 64.8,255.1 68.3,248.1 M263.2,465.9 263.1,465.9 M254.8,465.4 250.9,465.1 241.3,463.7 M109.1,353.0 102.7,352.1 95.1,351.6 M-7.3,405.0 -3.1,410.2 7.0,409.7 M96.5,516.7 92.0,520.3 89.7,524.7 M94.8,162.4 99.6,158.7 104.9,157.7 M307.2,85.1 303.7,75.7 302.9,70.8 M391.6,202.9 398.9,209.5 401.2,213.1 M569.2,3.1 582.0,4.1 596.1,0.5 M330.3,147.2 333.6,143.9 342.3,138.4 M115.4,328.2 111.3,326.6 104.0,320.5 M533.4,272.8 527.6,268.4 519.4,268.5 M164.7,199.1 173.0,191.2 M175.9,188.0 180.1,183.3 M545.2,458.3 552.4,461.8 560.6,462.5 M450.8,346.4 446.4,349.3 439.9,352.5 M252.8,139.1 248.8,134.6 248.5,125.3 M266.0,135.6 271.8,141.3 277.4,149.5 M300.3,360.3 295.1,367.2 290.6,372.1 M356.7,172.5 360.0,175.8 366.0,179.7 M342.4,396.0 340.4,403.9 335.7,410.0 M217.7,263.4 225.1,263.1 232.1,260.8 M142.6,206.7 140.4,205.1 M133.8,195.2 132.7,192.5 M566.4,175.6 556.7,183.0 541.1,186.4 M600.8,151.3 594.8,148.0 586.5,149.9 M362.9,195.7 355.3,194.2 349.4,195.4 M342.4,396.0 339.6,394.5 331.7,391.3 M522.8,13.4 528.3,8.1 531.7,1.4 M113.5,375.0 123.5,373.5 127.5,371.7 M25.3,363.0 16.8,359.4 11.4,350.0 M589.1,257.7 588.3,267.1 588.9,269.1 M590.3,274.4 590.4,274.7 M93.5,119.2 94.9,128.9 95.6,133.2 M116.8,200.5 115.3,201.0 M111.6,201.8 104.3,197.8 M63.2,92.7 63.8,99.2 61.0,104.0 M506.5,461.8 510.2,462.9 518.2,468.0 M594.8,417.3 589.3,413.2 585.4,410.9 M335.7,410.0 327.3,407.7 322.8,403.6 M176.9,297.7 173.1,299.0 164.5,299.8 M267.9,262.7 267.6,270.8 264.2,280.6 M356.0,326.0 350.3,320.3 345.9,312.9 M573.9,276.3 577.3,276.6 M589.3,275.0 590.4,274.7 M492.8,224.2 488.3,230.9 481.5,239.4 M104.2,440.7 100.2,441.1 90.9,437.7 M75.2,516.8 81.9,511.4 86.1,506.5 M210.3,469.2 213.4,475.0 215.8,479.3 M84.8,378.1 94.9,382.9 99.1,385.9 M300.7,162.9 292.2,170.0 286.5,172.9 M299.4,380.0 295.6,375.7 290.6,372.1 M568.7,163.7 578.3,156.6 586.5,149.9 M592.1,226.7 592.0,220.6 593.2,214.2 M368.8,338.4 374.7,347.8 376.2,352.5 M101.6,499.3 96.5,503.9 86.1,506.5 M448.2,7.3 442.5,16.7 442.6,21.9 M393.6,316.1 384.7,313.9 381.4,307.2 M571.3,113.9 569.6,123.7 569.0,133.8 M230.4,7.9 230.5,14.9 232.1,18.6 M63.2,92.7 74.4,92.0 81.7,86.2 M589.1,257.7 588.9,254.1 591.1,244.5 M485.3,23.7 485.4,23.8 M492.2,32.2 497.7,37.4 M414.0,269.4 409.2,274.7 403.5,284.1 M525.0,413.9 523.8,418.1 522.2,424.7 M529.7,452.6 535.6,452.7 545.2,458.3 M388.4,219.6 395.4,213.7 401.2,213.1 M409.2,313.9 416.0,314.6 420.2,313.4 M398.3,139.9 403.4,133.7 405.7,129.6 M497.4,306.6 492.0,310.6 482.5,310.0 M233.1,501.3 229.4,493.2 223.5,488.1 M14.1,158.5 23.8,165.0 28.8,171.4 M133.4,239.8 127.8,235.8 124.6,234.0 M502.5,203.1 491.4,202.6 482.1,202.4 M190.5,273.0 186.0,272.4 177.3,275.1 M213.0,339.5 216.5,331.2 219.9,327.4 M148.6,298.7 140.5,294.9 136.5,291.7 M225.2,313.0 229.7,315.9 235.5,321.2 M506.1,193.2 515.4,188.0 520.7,188.7 M249.3,290.3 247.0,282.1 250.0,279.0 M318.8,264.7 316.5,270.8 320.0,278.8 M302.4,211.2 302.3,218.6 305.2,223.1 M569.2,3.1 580.7,9.0 594.1,19.6 M506.1,193.2 501.6,189.5 497.1,180.4 M276.1,252.2 280.6,246.1 284.9,244.0 M485.3,23.7 477.7,20.0 466.6,21.2 M376.1,284.3 377.2,280.8 381.2,274.4 M235.0,418.7 236.5,412.8 235.5,406.8 M409.2,313.9 413.2,306.1 418.2,303.4 M124.8,506.3 125.2,500.9 125.4,496.2 M75.7,94.3 80.4,98.7 89.2,100.3 M338.6,158.4 331.1,156.6 326.8,157.7 M308.4,252.3 304.1,257.1 302.0,261.2 M183.9,263.5 178.5,263.0 172.9,259.6 M14.1,158.5 19.6,155.7 26.3,153.8 M254.5,74.4 250.1,75.8 246.7,83.1 M149.2,217.1 152.5,221.2 150.9,227.7 M441.5,184.9 441.5,193.3 438.3,198.5 M316.4,210.0 324.3,211.3 328.2,210.0 M415.8,436.8 416.3,437.7 M421.3,446.6 422.3,458.8 M515.2,416.5 518.2,407.2 518.9,402.0 M13.4,444.3 12.6,438.6 5.7,427.5 M315.9,392.1 318.9,398.4 322.8,403.6 M327.2,380.0 320.0,386.7 315.9,392.1 M350.1,334.1 344.8,335.9 337.8,342.9 M601.3,55.3 597.5,64.3 598.9,68.4 M90.9,437.7 89.2,443.9 93.1,450.8 M482.5,310.0 485.5,315.8 485.8,324.7 M477.7,368.9 476.7,379.8 478.1,387.4 M10.9,173.2 11.9,163.5 14.1,158.5 M590.8,457.9 584.2,462.4 577.1,469.3 M463.1,104.2 456.2,106.2 452.0,103.7 M575.0,250.6 569.8,244.6 568.4,235.1 M452.8,357.5 458.3,357.8 466.5,352.7 M54.4,443.0 48.0,439.1 39.9,439.2 M428.3,436.3 424.4,434.9 415.8,436.8 M224.3,247.3 226.2,242.3 231.4,233.0 M75.9,269.7 69.9,260.9 58.6,257.5 M249.3,484.0 258.6,485.0 262.8,486.3 M338.6,158.4 334.6,149.9 330.3,147.2 M141.7,382.9 149.4,377.6 152.3,377.0 M459.5,229.7 461.3,236.8 459.7,244.9 M216.7,297.0 207.0,301.3 200.4,300.5 M464.2,265.2 458.8,265.6 449.4,262.6 M13.4,444.3 1.5,446.3 -6.1,447.7 M307.8,182.7 300.1,183.0 296.7,182.7 M39.7,417.0 44.2,422.6 43.8,427.2 M60.9,463.1 54.4,461.3 43.8,461.5 M85.6,136.9 85.9,141.4 86.0,147.1 M250.3,494.2 247.9,499.6 243.8,503.0 M6.3,398.4 11.4,395.2 18.8,392.3 M415.0,356.2 420.6,347.6 423.0,341.8 M200.7,495.6 196.8,501.3 195.3,504.6 M579.2,228.3 576.2,229.8 568.4,235.1 M142.6,206.7 140.2,210.4 M132.5,222.9 132.2,223.3 M369.6,154.3 359.6,146.6 355.6,143.9 M527.6,174.9 531.6,173.9 539.7,167.0 M342.7,274.7 342.6,265.1 336.9,259.6 M265.1,-7.5 275.0,-3.7 285.6,-3.4 M596.8,283.2 595.4,281.4 590.4,274.7 M196.4,329.7 199.8,328.5 207.6,328.9 M231.4,233.0 237.4,228.2 242.1,224.6 M287.2,346.6 274.5,341.1 264.6,337.0 M391.0,284.8 382.7,287.1 376.1,284.3 M429.5,189.5 424.5,188.3 417.0,188.8 M137.6,494.4 133.8,487.8 129.5,483.0 M104.2,440.7 109.4,439.8 M114.9,435.6 116.1,434.4 M401.1,414.9 405.5,416.5 411.5,420.4 M86.0,147.1 91.8,137.4 95.6,133.2 M270.8,288.9 266.1,291.9 263.5,298.2 M253.0,267.4 248.3,264.2 243.7,262.2 M385.7,145.1 387.0,148.6 391.5,155.6 M10.9,173.2 5.1,177.6 -2.7,181.1 M536.9,221.6 541.1,220.4 550.5,214.3 M487.6,114.2 480.2,108.5 478.1,105.1 M349.5,235.6 349.5,229.5 353.1,222.5 M11.4,350.0 6.3,350.2 M4.0,352.1 2.5,355.5 M284.5,228.4 277.6,224.4 276.0,220.2 M127.1,330.1 118.6,329.6 115.4,328.2 M312.5,43.6 305.7,48.2 297.4,50.9 M267.8,211.6 264.5,217.2 260.6,226.9 M239.6,146.3 239.9,154.8 234.6,162.9 M58.2,202.3 65.9,199.3 79.4,194.0 M176.9,297.7 166.0,291.5 160.4,287.3 M299.4,380.0 306.8,379.7 314.8,375.6 M381.4,307.2 383.2,303.1 383.7,295.5 M144.6,334.9 146.4,332.8 150.7,326.4 M449.4,262.6 443.6,260.1 439.3,253.8 M510.5,430.1 514.9,426.3 522.2,424.7 M391.0,284.8 383.7,281.6 381.2,274.4 M265.1,-7.5 268.6,1.2 269.9,8.0 M414.0,269.4 408.1,265.0 403.9,260.9 M210.3,469.2 205.5,476.7 197.6,482.4 M497.2,267.8 486.7,262.8 481.6,260.0 M39.3,362.9 48.2,360.3 52.8,355.3 M571.3,382.8 569.2,381.9 561.3,382.4 M2.8,129.1 5.9,129.0 13.7,128.7 M401.1,414.9 394.1,413.0 388.0,410.9 M149.2,217.1 159.2,219.9 163.9,219.5 M66.1,61.2 72.9,63.5 81.6,64.3 M78.6,53.8 81.1,58.0 81.6,64.3 M468.3,136.6 460.3,139.6 452.1,139.3 M245.9,326.2 247.5,329.8 253.1,335.4 M160.4,287.3 154.7,284.3 150.6,279.6 M130.8,172.6 125.2,169.5 120.2,172.4 M187.1,349.2 192.2,347.9 200.1,340.9 M234.7,525.5 232.0,520.6 228.1,517.6 M295.2,246.0 287.9,242.3 284.9,244.0 M222.5,192.6 214.6,190.3 212.5,186.9 M239.2,116.1 243.7,121.2 248.5,125.3 M180.1,183.3 188.5,183.6 199.1,179.1 M297.7,195.6 298.4,186.9 296.7,182.7 M189.8,339.3 191.3,333.9 196.4,329.7 M243.2,4.8 239.6,9.7 232.1,18.6 M525.0,413.9 528.1,412.5 536.1,414.4 M496.9,453.7 495.2,446.6 494.4,435.5 M385.7,145.1 378.3,144.1 374.1,141.3 M249.4,308.0 243.7,310.6 238.9,311.7 M450.2,36.7 458.2,27.2 466.6,21.2 M68.0,71.9 74.3,66.8 81.6,64.3 M212.5,493.4 213.8,483.9 215.8,479.3 M541.2,253.5 548.1,250.6 554.0,245.7 M284.1,140.6 293.2,129.4 296.5,123.4 M520.0,44.4 519.4,52.0 518.7,58.6 M339.0,-5.2 333.1,-3.7 324.7,3.7 M555.8,77.8 559.1,82.2 568.2,86.4 M415.3,235.2 407.7,233.9 399.3,232.3 M495.1,416.3 498.7,408.8 500.4,406.4 M30.9,457.6 35.6,458.8 43.8,461.5 M441.5,184.9 445.5,187.8 451.8,184.9 M430.0,128.1 426.0,131.5 417.8,131.8 M598.3,384.6 593.1,391.7 586.3,395.0 M68.1,198.7 75.5,195.1 79.4,194.0 M51.3,43.0 57.9,53.8 66.1,61.2 M113.3,299.2 115.4,306.2 111.5,310.8 M335.3,179.9 333.2,183.0 325.5,183.4 M58.5,518.1 63.8,519.7 67.2,526.4 M209.7,213.1 214.2,220.8 213.2,227.9 M541.1,186.4 533.7,191.4 527.4,199.6 M246.3,249.5 252.0,243.8 259.1,243.1 M405.6,151.9 399.8,154.9 391.5,155.6 M235.0,418.7 242.7,422.1 244.5,424.3 M201.8,271.5 207.0,278.1 208.1,280.7 M212.5,186.9 206.9,180.5 199.1,179.1 M286.9,126.9 286.6,132.2 284.1,140.6 M555.8,77.8 555.3,82.9 557.1,89.8 M49.2,368.8 44.6,367.5 39.3,362.9 M433.1,340.9 434.5,347.9 439.9,352.5 M285.6,189.1 288.6,180.0 286.5,172.9 M357.2,205.4 353.3,214.8 353.1,222.5 M43.8,427.2 48.8,423.6 57.8,424.0 M171.1,505.9 177.5,501.2 177.9,497.9 M416.7,154.7 423.4,146.4 426.3,137.7 M101.6,499.3 104.7,496.7 113.8,493.5 M428.2,289.9 422.1,294.6 418.2,303.4 M277.4,149.5 282.3,150.3 291.6,149.6 M142.6,479.7 134.6,479.5 129.5,483.0 M136.5,291.7 137.9,285.1 136.3,280.3 M160.3,262.6 164.9,258.5 172.9,259.6 M569.2,3.1 564.7,10.9 562.8,18.8 M516.7,-4.4 508.9,-4.1 503.1,-6.9 M297.4,50.9 299.5,37.0 302.1,29.1 M239.3,274.4 230.6,271.4 227.9,270.7 M130.3,381.4 123.8,380.1 113.5,375.0 M464.1,75.9 452.8,77.6 443.5,73.8 M390.9,268.9 397.6,265.8 403.9,260.9 M590.4,274.7 592.1,273.4 M594.6,271.4 597.6,269.0 602.4,258.9 M468.9,238.4 470.0,227.6 468.4,220.9 M495.4,248.8 494.2,257.4 497.2,267.8 M468.4,220.9 475.0,223.2 483.3,219.7 M256.4,47.1 251.7,53.0 248.0,61.8 M542.8,445.5 534.5,447.5 529.7,452.6 M553.5,261.9 548.6,262.0 542.5,267.9 M377.2,365.5 375.3,361.0 376.2,352.5 M498.9,77.5 502.9,76.3 511.8,70.7 M296.7,230.7 289.9,231.0 284.5,228.4 M553.5,261.9 547.6,254.8 541.2,253.5 M577.1,469.3 571.5,464.3 560.6,462.5 M326.9,61.0 322.1,48.8 322.0,37.9 M324.9,16.9 334.0,23.9 338.1,31.6 M430.7,206.4 436.2,201.4 438.3,198.5 M311.8,194.3 318.1,194.5 326.7,199.9 M473.2,330.3 477.8,330.2 485.8,324.7 M315.4,296.1 309.3,299.0 304.0,297.6 M138.7,522.1 136.5,516.6 139.4,509.2 M490.7,287.2 489.3,280.2 487.3,276.7 M330.3,147.2 330.3,153.0 326.8,157.7 M376.6,125.5 374.6,132.9 374.1,141.3 M177.9,497.9 174.5,490.8 173.9,483.8 M284.5,228.4 287.1,221.8 285.2,213.3 M-8.3,381.2 -0.4,370.6 7.0,364.6 M554.4,132.5 559.0,131.4 569.0,133.8 M88.4,415.9 94.9,411.1 100.6,407.6 M305.0,284.1 312.0,288.4 315.4,296.1 M111.5,310.8 110.5,313.0 104.0,320.5 M182.2,330.5 176.4,333.5 168.6,336.8 M156.5,474.0 162.4,478.3 164.2,487.6 M409.3,205.3 415.8,209.9 418.7,211.6 M328.2,210.0 324.4,216.2 320.2,219.4 M460.4,153.1 470.1,155.9 477.7,157.8 M486.0,50.3 490.8,45.9 497.7,37.4 M190.2,492.9 182.6,495.7 177.9,497.9 M252.4,164.0 248.7,156.2 250.9,152.2 M472.4,90.8 473.5,100.5 478.1,105.1 M520.5,140.9 514.3,139.7 512.3,134.9 M83.3,255.0 73.9,252.0 68.3,248.1 M590.8,457.9 583.8,455.4 575.7,450.0 M357.2,205.4 362.3,198.0 362.9,195.7 M247.4,517.3 244.5,510.7 243.8,503.0 M587.3,136.4 588.9,144.3 586.5,149.9 M190.2,492.9 195.5,498.5 195.3,504.6 M563.2,225.1 573.0,225.9 579.2,228.3 M473.2,330.3 473.6,333.5 468.1,341.0 M320.9,139.5 318.3,144.2 311.0,152.7 M58.8,28.1 55.5,38.0 51.3,43.0 M460.9,59.1 470.0,59.9 476.1,55.5 M200.7,495.6 197.3,495.6 190.2,492.9 M520.2,288.4 528.8,288.5 531.7,286.0 M393.6,316.1 392.3,317.5 387.5,324.7 M497.2,267.8 494.9,274.8 487.3,276.7 M7.0,409.7 5.8,416.1 5.7,427.5 M307.7,270.4 313.6,273.7 320.0,278.8 M359.1,-4.3 352.4,0.6 349.3,3.1 M133.4,239.8 133.5,232.2 132.2,223.3 M432.6,396.1 426.4,388.6 414.5,384.6 M604.0,294.1 602.7,289.5 596.8,283.2 M136.3,280.3 130.9,278.9 128.4,271.8 M596.1,0.5 595.7,7.1 594.1,19.6 M463.1,104.2 468.0,105.1 478.1,105.1 M401.6,391.3 405.3,381.4 403.2,376.8 M153.2,357.7 150.6,350.5 153.3,340.6 M263.2,465.9 263.3,468.5 M262.9,485.6 262.8,486.3 M65.4,450.1 65.7,442.6 71.4,434.6 M391.0,183.2 395.6,185.3 401.3,190.7 M358.1,288.1 363.4,284.2 363.6,275.6 M-8.6,145.8 -7.5,153.1 -8.3,156.4 M169.3,472.7 168.5,480.5 164.2,487.6 M198.0,4.1 210.1,-3.7 216.7,-6.3 M101.8,526.7 112.4,522.1 118.4,518.4 M463.1,104.2 466.5,110.3 472.4,116.2 M583.7,97.0 578.3,92.6 568.2,86.4 M253.1,335.4 256.4,339.9 M257.1,340.8 258.7,342.9 261.4,348.3 M417.3,57.7 416.5,65.2 417.6,69.3 M400.3,404.4 401.2,407.5 401.1,414.9 M113.1,396.6 104.1,388.9 99.1,385.9 M522.2,424.7 522.0,429.1 522.5,437.7 M34.5,120.4 31.3,125.7 27.2,135.7 M321.0,172.3 324.9,180.1 325.5,183.4 M225.2,313.0 233.9,311.0 238.9,311.7 M350.1,334.1 347.4,328.7 342.4,325.0 M414.0,269.4 417.6,273.3 422.7,281.5 M262.5,497.9 262.5,498.1 M263.4,521.4 263.1,523.5 M478.7,144.6 476.4,149.9 477.7,157.8 M468.9,238.4 473.5,238.9 481.5,239.4 M415.3,235.2 422.7,236.7 425.8,232.3 M216.7,-6.3 214.6,-3.7 212.2,2.9 M212.5,186.9 215.6,183.0 215.0,175.4 M522.5,437.7 523.7,446.3 529.7,452.6 M437.8,101.2 434.7,108.2 430.2,114.3 M541.2,253.5 539.5,263.1 542.5,267.9 M198.2,289.8 190.6,289.2 182.8,288.5 M549.1,-4.2 538.7,-2.7 531.7,1.4 M-7.2,424.7 -0.2,424.6 5.7,427.5 M195.7,226.1 205.5,228.5 213.2,227.9 M164.7,199.1 177.3,198.0 184.2,194.1 M270.8,288.9 278.9,288.3 287.1,284.6 M180.1,183.3 180.4,175.8 182.3,162.9 M578.0,186.4 571.5,179.7 566.4,175.6 M54.4,443.0 51.5,447.0 43.7,449.2 M39.3,362.9 32.9,356.2 30.6,351.8 M242.9,364.0 243.5,363.9 M268.2,365.1 268.4,365.1 M460.4,153.1 457.4,162.2 459.9,166.3 M312.5,43.6 317.9,38.6 322.0,37.9 M504.9,166.2 509.7,167.2 514.7,164.1 M307.2,241.8 300.0,234.9 296.7,230.7 M288.6,297.4 285.2,307.9 284.7,309.6 M282.4,317.3 281.8,319.5 M230.7,82.8 245.5,77.8 254.5,74.4 M441.7,369.5 437.6,365.8 432.1,366.7 M477.7,368.9 472.5,376.5 470.5,379.6 M115.4,328.2 111.0,332.2 109.7,342.1 M434.9,299.1 433.1,297.3 428.2,289.9 M567.4,392.4 563.3,386.2 561.3,382.4 M536.1,414.4 540.6,416.8 545.1,419.1 M429.5,189.5 433.2,195.1 438.3,198.5 M549.2,68.4 555.1,76.1 557.1,89.8 M473.8,126.4 472.6,121.3 472.4,116.2 M230.3,302.6 229.7,305.2 225.2,313.0 M13.4,444.3 8.5,450.2 -2.0,458.1 M336.1,49.0 326.6,42.7 322.0,37.9 M520.2,288.4 511.2,290.5 507.4,294.6 M51.3,43.0 41.4,40.2 M26.5,36.2 23.8,35.5 M238.5,178.4 242.9,176.9 248.6,173.6 M219.9,327.4 216.2,328.5 207.6,328.9 M133.3,252.8 140.8,252.3 144.4,255.2 M246.7,83.1 242.5,89.7 242.3,92.5 M560.2,474.4 562.2,468.1 560.6,462.5 M7.2,141.4 0.4,133.2 -9.7,130.4 M261.6,158.5 259.1,159.8 252.4,164.0 M-7.1,360.6 -0.4,360.1 7.0,364.6 M183.9,263.5 188.6,259.7 189.0,251.7 M261.4,348.3 262.3,357.3 262.4,357.4 M268.0,364.5 268.4,365.1 M495.2,143.2 500.1,143.8 508.3,145.1 M559.4,413.6 561.6,411.2 563.1,403.3 M40.5,387.5 44.2,389.9 48.3,396.8 M204.2,233.8 208.5,240.4 213.4,246.2 M375.4,329.4 369.2,336.5 368.8,338.4 M124.0,299.7 131.9,296.2 136.5,291.7 M67.3,262.8 67.8,263.3 M75.7,269.5 75.9,269.7 M364.5,299.0 369.6,294.3 376.1,284.3 M466.7,177.8 457.5,183.1 451.8,184.9 M251.5,471.6 258.3,467.9 M263.0,466.0 263.2,465.9 M327.8,336.4 335.5,341.9 337.8,342.9 M575.7,450.0 584.5,450.7 591.5,446.5 M520.2,207.5 522.7,210.4 525.6,217.7 M222.0,505.4 226.8,502.4 233.1,501.3 M124.8,506.3 122.0,500.2 113.8,493.5 M61.7,397.2 56.0,394.7 48.3,396.8 M80.5,127.6 86.3,125.6 93.5,119.2 M182.2,330.5 175.4,322.9 173.6,320.4 M291.4,256.4 292.4,249.9 295.2,246.0 M10.2,117.2 17.5,115.1 24.5,107.8 M318.8,264.7 325.0,268.0 327.8,268.9 M253.0,267.4 246.0,270.7 239.3,274.4 M68.1,198.7 63.3,202.6 58.2,202.3 M115.9,163.0 112.2,159.4 104.9,157.7 M443.5,73.8 442.2,79.4 445.8,86.9 M311.4,0.1 317.8,11.5 324.9,16.9 M18.6,455.3 6.4,454.0 -2.0,458.1 M422.3,83.9 420.3,74.1 417.6,69.3 M376.1,284.3 380.4,288.5 383.7,295.5 M30.9,457.6 38.7,452.9 43.7,449.2 M570.2,415.3 576.4,414.3 585.4,410.9 M567.4,392.4 564.2,397.1 563.1,403.3 M475.6,302.0 470.2,298.1 461.3,298.9 M603.3,309.3 601.9,295.9 596.8,283.2 M527.6,174.9 526.5,180.1 520.7,188.7 M116.3,243.4 118.7,236.7 124.6,234.0 M231.5,476.8 222.0,476.1 215.8,479.3 M307.8,182.7 303.1,191.0 297.7,195.6 M90.9,437.7 91.8,432.1 97.0,426.8 M336.9,259.6 344.6,257.0 347.4,253.9 M286.9,126.9 294.1,126.7 296.5,123.4 M602.8,432.7 594.2,438.5 591.5,446.5 M285.2,213.3 282.8,216.1 276.0,220.2 M481.5,9.2 480.5,18.7 475.4,27.4 M425.8,232.3 423.4,240.3 426.6,251.7 M472.4,116.2 473.0,110.4 478.1,105.1 M42.9,471.5 45.2,466.6 43.8,461.5 M65.4,450.1 71.6,458.6 83.7,463.3 M426.6,251.7 430.0,255.1 439.3,253.8 M231.4,233.0 230.9,224.9 228.7,217.9 M171.1,505.9 165.7,500.5 162.0,497.7 M366.8,245.1 369.8,240.1 374.1,235.0 M362.9,195.7 369.9,190.5 371.0,188.4 M143.9,272.0 146.1,265.9 144.4,255.2 M82.0,358.7 77.1,367.5 70.6,371.6 M568.2,437.6 562.9,436.2 556.1,430.4 M448.1,167.2 439.1,167.3 434.6,168.4 M559.4,276.6 560.2,284.4 558.1,287.0 M167.3,242.2 160.4,242.3 157.1,241.1 M437.8,101.2 441.7,92.7 445.8,86.9 M545.1,419.1 550.6,424.8 556.1,430.4 M570.1,287.8 570.3,295.7 M570.4,300.9 570.4,301.2 575.6,312.3 M205.8,507.9 201.0,507.2 195.3,504.6 M518.6,253.6 512.3,246.9 509.1,245.9 M569.2,3.1 559.4,2.4 549.1,-4.2 M7.0,364.6 5.3,358.4 2.5,355.5 M464.0,278.7 459.9,276.0 453.8,278.9 M430.5,179.3 433.7,179.7 441.5,184.9 M35.1,398.1 39.8,400.0 48.3,396.8 M521.8,233.4 524.2,226.6 525.6,217.7 M520.5,140.9 513.8,140.5 508.3,145.1 M182.2,330.5 190.1,329.0 196.4,329.7 M454.2,195.6 444.5,194.5 438.3,198.5 M267.8,211.6 265.1,215.3 257.7,216.1 M47.7,512.2 40.8,511.8 35.4,514.8 M586.7,39.0 596.9,49.9 601.3,55.3 M575.7,450.0 572.2,443.2 568.2,437.6 M275.7,102.0 282.6,95.2 285.7,87.5 M426.3,137.7 421.1,137.6 417.8,131.8 M107.3,510.4 115.4,513.0 118.4,518.4 M563.2,225.1 568.7,232.2 568.4,235.1 M13.4,444.3 22.2,444.3 25.0,438.7 M78.9,399.2 83.3,403.0 90.1,403.2 M235.0,418.7 233.7,414.0 M231.6,404.7 231.8,397.2 M421.5,426.7 417.2,430.5 415.8,436.8 M477.7,368.9 477.5,365.1 479.3,357.3 M382.3,191.8 387.4,184.6 391.0,183.2 M178.0,217.7 172.9,216.6 163.9,219.5 M416.7,154.7 421.3,159.8 422.6,167.9 M222.0,505.4 227.8,512.3 228.1,517.6 M276.1,252.2 275.9,243.7 274.3,237.9 M163.2,312.8 166.0,303.7 164.5,299.8 M430.0,128.1 430.1,133.2 426.3,137.7 M421.5,426.7 415.9,423.0 411.5,420.4 M359.1,157.3 361.5,155.7 369.6,154.3 M357.2,205.4 362.7,207.3 368.4,210.8 M96.5,516.7 89.5,512.1 86.1,506.5 M428.3,436.3 426.6,441.2 M424.6,448.0 422.3,458.8 M417.0,188.8 407.5,187.8 401.3,190.7 M113.1,396.6 104.0,403.4 100.6,407.6 M461.3,298.9 454.9,296.6 452.3,292.0 M382.3,191.8 386.2,195.0 391.6,202.9 M499.6,6.0 490.6,-0.6 485.1,-10.0 M450.3,213.7 453.8,222.1 459.5,229.7 M246.6,199.1 251.7,196.7 261.7,189.0 M594.8,417.3 591.3,423.9 588.2,426.9 M42.9,471.5 50.2,470.0 60.9,463.1 M149.2,217.1 144.3,213.0 142.6,206.7 M266.0,135.6 266.4,134.5 M270.4,114.2 270.3,112.6 M167.3,242.2 167.8,253.1 172.9,259.6 M430.0,128.1 431.8,122.3 430.2,114.3 M338.1,192.2 332.5,185.1 325.5,183.4 M598.6,395.9 591.6,389.0 587.0,384.0 M568.2,437.6 561.5,444.1 557.9,447.0 M178.0,217.7 184.6,220.5 195.7,226.1 M391.0,284.8 385.4,288.2 383.7,295.5 M330.3,147.2 327.9,140.6 320.9,139.5 M190.4,204.7 184.6,201.0 184.2,194.1 M539.7,167.0 539.2,175.4 541.1,186.4 M391.6,202.9 394.4,197.4 401.3,190.7 M579.2,228.3 588.6,224.4 602.7,221.3 M466.6,21.2 455.4,18.6 442.6,21.9 M401.6,118.9 405.4,112.4 410.0,110.2 M466.6,21.2 468.2,26.1 475.4,27.4 M373.9,173.5 362.4,171.1 356.7,172.5 M195.7,226.1 195.9,228.5 190.5,236.4 M212.5,493.4 206.3,495.7 200.7,495.6 M475.6,302.0 474.5,295.8 472.7,284.0 M40.5,387.5 37.4,395.1 35.1,398.1 M-7.3,405.0 -1.9,401.0 6.3,398.4 M453.4,387.5 464.9,383.1 470.5,379.6 M282.4,27.6 292.9,30.4 302.1,29.1 M34.5,498.6 42.1,496.1 45.3,488.6 M311.8,194.3 301.9,194.1 297.7,195.6 M322.0,37.9 332.7,34.0 338.1,31.6 M464.0,278.7 462.4,270.4 464.2,265.2 M511.8,70.7 514.9,81.1 513.9,90.8 M13.7,128.7 18.4,116.4 24.5,107.8 M170.2,520.4 163.7,518.8 160.0,520.2 M213.0,339.5 206.5,337.5 200.1,340.9 M68.0,71.9 60.4,70.2 52.3,67.4 M496.6,332.3 492.7,328.8 485.8,324.7 M382.3,191.8 378.2,188.1 371.0,188.4 M376.9,316.9 381.1,310.3 381.4,307.2 M534.2,211.9 529.8,206.4 527.4,199.6 M117.7,283.5 120.7,279.6 128.4,271.8 M401.6,391.3 409.9,389.3 414.5,384.6 M263.5,298.2 266.4,301.4 271.4,308.3 M110.7,423.6 111.5,427.4 116.1,434.4 M297.1,86.4 292.4,89.3 M285.3,94.2 275.7,102.0 M591.1,244.5 583.5,249.1 575.0,250.6 M204.2,233.8 199.7,236.6 190.5,236.4 M94.8,162.4 95.7,168.7 98.7,172.3 M520.5,140.9 520.3,153.4 514.7,164.1 M10.9,173.2 3.1,170.8 0.2,168.0 M176.9,297.7 179.7,290.2 182.8,288.5 M453.4,387.5 455.2,385.6 459.5,379.5 M116.8,200.5 114.2,193.9 112.0,182.3 M427.6,384.8 423.2,384.5 414.5,384.6 M320.9,139.5 324.1,146.7 326.8,157.7 M536.9,221.6 532.1,217.5 525.6,217.7 M468.3,136.6 471.3,131.4 473.8,126.4 M297.1,86.4 303.3,87.0 307.2,85.1 M484.6,69.6 482.9,64.9 476.1,55.5 M271.4,308.3 278.6,311.7 281.8,319.5 M248.1,210.0 252.6,214.3 257.7,216.1 M570.2,415.3 566.1,406.3 563.1,403.3 M398.7,168.6 395.6,159.8 391.5,155.6 M525.0,413.9 519.1,406.0 518.9,402.0 M375.4,329.4 379.8,325.4 387.5,324.7 M230.9,206.2 229.2,213.6 228.7,217.9 M409.3,365.8 406.9,370.7 403.2,376.8 M547.5,285.4 552.1,286.0 558.1,287.0 M43.7,449.2 40.9,446.5 39.9,439.2 M246.6,199.1 246.8,206.0 248.1,210.0 M417.6,69.3 415.1,77.8 412.0,87.1 M284.1,360.6 276.8,364.5 268.4,365.1 M269.5,326.9 275.5,324.2 281.8,319.5 M454.2,195.6 451.7,191.3 451.8,184.9 M543.1,395.1 546.3,399.0 552.8,405.4 M417.6,69.3 426.0,66.1 429.3,60.5 M204.0,167.0 210.3,170.0 215.0,175.4 M499.6,6.0 501.8,-1.6 503.1,-6.9 M170.2,520.4 175.3,519.4 183.8,516.6 M311.0,152.7 316.7,152.4 326.8,157.7 M393.6,316.1 397.8,308.8 400.0,303.2 M354.9,304.3 358.8,302.5 364.5,299.0 M593.2,214.2 594.9,206.1 592.1,196.1 M511.7,449.8 514.9,445.3 522.5,437.7 M359.1,157.3 358.2,167.5 356.7,172.5 M250.3,494.2 254.2,489.3 262.8,486.3 M336.1,49.0 334.6,39.1 338.1,31.6"/><path fill="none" stroke="#7d7d7d" stroke-width="0.7" d="M93.1,350.6 103.8,357.4 117.3,361.1 126.8,362.9 137.6,366.6 147.0,367.5 160.0,367.9 M151.7,196.7 156.4,204.0 161.9,205.0 174.0,212.5 173.3,220.3 182.1,217.7 182.8,224.0 188.9,224.0 195.6,229.3 203.3,230.9 209.1,237.5 218.5,236.5 228.0,241.2 222.6,248.8 219.2,269.0 211.8,272.0 204.4,282.0 199.6,292.8 198.3,297.7 211.8,302.5 213.1,314.1 208.4,322.7 210.5,331.3 220.6,336.9 218.5,342.9 M-2.2,378.1 6.6,373.9 20.1,379.3 29.6,376.6 33.6,383.0 24.1,393.7 22.8,411.5 16.1,417.6 22.8,429.0 21.5,442.8 16.1,454.8 17.1,460.0 M162.8,190.6 168.6,194.1 176.7,189.4 184.8,188.9 191.5,193.2 195.6,198.6 194.2,204.0 198.3,204.0 203.0,213.5 199.6,217.3 195.6,224.0 195.6,229.3 M199.6,217.3 205.0,224.0 203.3,230.9 M214.5,148.0 212.5,162.6 211.8,171.4 200.3,180.2 201.0,186.7 199.6,194.3 198.3,204.0 M234.1,111.2 244.9,113.5 M309.0,133.9 311.7,144.6 307.9,158.1 313.7,169.2 314.4,181.3 317.8,198.6 310.4,201.8 303.6,204.0 284.7,213.5 280.6,215.6 286.0,224.0 291.5,234.4 304.0,245.4 298.9,249.8 292.8,261.0 292.8,267.0 282.0,271.0 265.8,269.0 255.7,273.0 246.9,270.0 233.4,267.0 219.9,269.4 M246.9,270.0 246.2,280.0 258.4,284.0 253.6,292.8 242.9,294.8 238.8,303.5 231.4,294.8 211.8,302.5 M258.4,284.0 267.1,282.0 282.0,280.0 302.2,287.9 314.4,292.8 327.9,287.9 334.7,284.0 M302.2,287.9 300.9,294.8 299.5,300.6 302.9,308.3 M304.0,245.4 315.8,248.8 319.8,240.6 332.0,244.7 346.1,248.8 348.2,261.0 346.8,267.0 340.0,273.0 334.7,284.0 M317.8,198.6 323.9,202.9 337.4,211.4 338.7,207.2 345.5,217.7 356.2,211.4 364.4,220.9 371.8,229.3 359.0,240.6 346.1,248.8 M371.8,229.3 380.5,232.4 391.4,232.4 407.5,238.6 421.7,237.5 416.3,252.9 M348.2,261.0 359.0,266.0 371.1,265.0 381.9,259.0 394.0,255.9 407.5,249.8 416.3,252.9 426.5,259.0 M421.7,237.5 423.1,228.2 435.9,213.5 442.7,208.2 435.9,186.7 430.5,174.7 440.0,165.9 440.0,152.5 434.5,134.4 425.1,122.8 381.9,124.0 M425.1,122.8 414.3,107.6 403.5,101.7 M401.5,83.3 414.3,75.3 441.3,77.7 461.5,85.0 476.4,92.2 468.3,106.5 464.2,118.2 461.5,125.1 448.0,134.4 434.5,134.4 M446.2,38.7 462.9,46.8 476.4,48.0 486.5,46.8 495.3,63.0 498.0,81.3 476.4,92.2 M486.5,46.8 488.5,35.4 495.3,-1.0 M498.0,81.3 534.5,97.0 535.8,120.5 546.6,136.6 558.8,152.5 546.6,170.3 573.6,169.2 580.3,194.3 597.9,209.3 M435.9,186.7 448.0,185.7 461.5,179.1 481.8,187.8 502.0,185.7 529.0,188.9 535.8,174.7 546.6,170.3 M426.5,259.0 441.3,263.0 456.2,266.0 468.3,261.0 476.4,255.9 488.5,271.0 498.0,288.9 496.7,308.3 498.0,311.2 508.8,314.1 518.2,317.0 M476.4,255.9 488.5,250.9 511.5,265.0 522.3,290.8 518.2,292.8 498.0,311.2 M426.5,259.0 414.3,275.0 404.9,288.9 390.7,298.7 381.9,297.7 372.5,302.5 357.6,304.5 346.8,296.7 338.7,289.9 334.7,284.0 M300.9,310.3 313.0,310.3 327.9,303.5 333.3,294.8 338.7,289.9 M372.5,302.5 379.2,316.0 373.8,319.9 360.3,318.0 345.5,315.1 333.3,316.0 332.0,327.5 337.4,335.0 350.9,348.1 356.2,357.4 366.4,365.7 M373.8,319.9 375.2,329.4 380.5,338.8 377.9,348.1 373.8,353.7 369.8,348.1 366.4,365.7 M373.8,353.7 386.0,353.7 391.4,361.1 388.7,364.8 380.5,370.3 378.5,377.5 M390.7,298.7 400.8,310.3 407.5,321.8 421.0,327.5 423.8,334.1 422.4,346.3 426.5,357.4 419.7,368.4 M391.4,361.1 398.1,353.7 408.9,366.6 413.0,370.3 419.7,368.4 M388.7,364.8 395.4,372.1 413.0,370.3 M395.4,372.1 394.0,384.8 400.1,396.4 396.8,408.0 387.3,417.6 M400.1,396.4 414.3,392.0 426.5,387.5 426.5,375.7 419.7,368.4 M426.5,387.5 441.3,384.8 457.5,388.4 469.7,381.2 481.8,375.7 495.3,376.1 M469.7,381.2 472.4,388.4 469.0,398.7 M423.8,334.1 441.3,344.4 461.5,345.3 475.0,337.9 485.9,336.9 503.1,343.5 M87.6,495.0 93.7,504.9 94.4,529.2 M233.8,464.1 230.0,475.0 229.4,493.3 221.2,513.0 219.9,529.2"/><path fill="none" stroke="#8a8a8a" stroke-width="0.8" stroke-dasharray="1.2 1.2" d="M529.0,31.0 531.0,51.0 534.0,66.0 535.0,79.0 534.0,92.0 553.0,91.0 573.0,89.0 594.0,86.0 M594.0,107.0 578.0,121.0 571.0,131.0 566.0,143.0 572.0,156.0 594.0,161.0 M548.0,0.0 552.0,16.0 573.0,21.0 594.0,18.0"/><circle cx="107.8" cy="193.8" r="24.6" fill="#9a5cf5" fill-opacity="0.27"/><circle cx="211.6" cy="176.1" r="24.6" fill="#9a5cf5" fill-opacity="0.27"/><circle cx="277.2" cy="187.3" r="24.7" fill="#9a5cf5" fill-opacity="0.27"/><circle cx="336.1" cy="193.6" r="32.9" fill="#9a5cf5" fill-opacity="0.27"/><circle cx="513.4" cy="213.9" r="25" fill="#9a5cf5" fill-opacity="0.27"/><circle cx="179.7" cy="245.5" r="24.8" fill="#9a5cf5" fill-opacity="0.27"/><circle cx="373.7" cy="253.4" r="17.9" fill="#9a5cf5" fill-opacity="0.27"/><circle cx="103.7" cy="308.5" r="17.8" fill="#9a5cf5" fill-opacity="0.27"/><circle cx="265.3" cy="323.4" r="33.1" fill="#9a5cf5" fill-opacity="0.27"/><circle cx="420.3" cy="322.8" r="32.9" fill="#9a5cf5" fill-opacity="0.27"/><circle cx="108.3" cy="388.0" r="17.8" fill="#9a5cf5" fill-opacity="0.27"/></svg><svg width="594" height="522" viewBox="0 0 594 522" style="position:absolute;left:0;top:0;font-family:'Liberation Sans',sans-serif"><circle cx="74.0" cy="86.2" r="1.7" fill="#fff" stroke="#777" stroke-width="0.8"/><circle cx="32.8" cy="147.4" r="2.3" fill="#fff" stroke="#444" stroke-width="0.9"/><circle cx="32.8" cy="147.4" r="1.1" fill="#333"/><circle cx="86.8" cy="144.4" r="1.7" fill="#fff" stroke="#777" stroke-width="0.8"/><circle cx="91.6" cy="166.5" r="1.7" fill="#fff" stroke="#777" stroke-width="0.8"/><circle cx="115.6" cy="187.8" r="2.3" fill="#fff" stroke="#444" stroke-width="0.9"/><circle cx="115.6" cy="187.8" r="1.1" fill="#333"/><circle cx="183.5" cy="169.0" r="2.3" fill="#fff" stroke="#444" stroke-width="0.9"/><circle cx="183.5" cy="169.0" r="1.1" fill="#333"/><circle cx="149.1" cy="244.2" r="2.3" fill="#fff" stroke="#444" stroke-width="0.9"/><circle cx="149.1" cy="244.2" r="1.1" fill="#333"/><circle cx="252.6" cy="142.4" r="1.7" fill="#fff" stroke="#777" stroke-width="0.8"/><circle cx="298.6" cy="165.8" r="2.3" fill="#fff" stroke="#444" stroke-width="0.9"/><circle cx="298.6" cy="165.8" r="1.1" fill="#333"/><circle cx="401.7" cy="172.3" r="2.3" fill="#fff" stroke="#444" stroke-width="0.9"/><circle cx="401.7" cy="172.3" r="1.1" fill="#333"/><circle cx="312.4" cy="218.6" r="2.3" fill="#fff" stroke="#444" stroke-width="0.9"/><circle cx="312.4" cy="218.6" r="1.1" fill="#333"/><circle cx="273.8" cy="258.7" r="1.7" fill="#fff" stroke="#777" stroke-width="0.8"/><circle cx="338.9" cy="257.2" r="2.3" fill="#fff" stroke="#444" stroke-width="0.9"/><circle cx="338.9" cy="257.2" r="1.1" fill="#333"/><circle cx="375.0" cy="271.6" r="2.3" fill="#fff" stroke="#444" stroke-width="0.9"/><circle cx="375.0" cy="271.6" r="1.1" fill="#333"/><circle cx="242.0" cy="311.7" r="1.7" fill="#fff" stroke="#777" stroke-width="0.8"/><circle cx="366.5" cy="342.5" r="2.3" fill="#fff" stroke="#444" stroke-width="0.9"/><circle cx="366.5" cy="342.5" r="1.1" fill="#333"/><circle cx="378.2" cy="369.0" r="2.3" fill="#fff" stroke="#444" stroke-width="0.9"/><circle cx="378.2" cy="369.0" r="1.1" fill="#333"/><circle cx="286.2" cy="378.4" r="2.3" fill="#fff" stroke="#444" stroke-width="0.9"/><circle cx="286.2" cy="378.4" r="1.1" fill="#333"/><circle cx="443.5" cy="61.9" r="2.3" fill="#fff" stroke="#444" stroke-width="0.9"/><circle cx="443.5" cy="61.9" r="1.1" fill="#333"/><circle cx="459.4" cy="116.2" r="2.3" fill="#fff" stroke="#444" stroke-width="0.9"/><circle cx="459.4" cy="116.2" r="1.1" fill="#333"/><circle cx="490.1" cy="133.6" r="2.3" fill="#fff" stroke="#444" stroke-width="0.9"/><circle cx="490.1" cy="133.6" r="1.1" fill="#333"/><circle cx="530.2" cy="210.9" r="2.3" fill="#fff" stroke="#444" stroke-width="0.9"/><circle cx="530.2" cy="210.9" r="1.1" fill="#333"/><circle cx="507.7" cy="281.0" r="2.3" fill="#fff" stroke="#444" stroke-width="0.9"/><circle cx="507.7" cy="281.0" r="1.1" fill="#333"/><circle cx="470.4" cy="331.2" r="2.3" fill="#fff" stroke="#444" stroke-width="0.9"/><circle cx="470.4" cy="331.2" r="1.1" fill="#333"/><circle cx="394.1" cy="324.0" r="2.3" fill="#fff" stroke="#444" stroke-width="0.9"/><circle cx="394.1" cy="324.0" r="1.1" fill="#333"/><circle cx="432.8" cy="363.5" r="2.3" fill="#fff" stroke="#444" stroke-width="0.9"/><circle cx="432.8" cy="363.5" r="1.1" fill="#333"/><circle cx="385.6" cy="388.4" r="2.3" fill="#fff" stroke="#444" stroke-width="0.9"/><circle cx="385.6" cy="388.4" r="1.1" fill="#333"/><circle cx="509.5" cy="394.3" r="1.7" fill="#fff" stroke="#777" stroke-width="0.8"/><circle cx="510.5" cy="408.8" r="1.7" fill="#fff" stroke="#777" stroke-width="0.8"/><circle cx="561.6" cy="413.2" r="2.3" fill="#fff" stroke="#444" stroke-width="0.9"/><circle cx="561.6" cy="413.2" r="1.1" fill="#333"/><circle cx="438.4" cy="447.7" r="2.3" fill="#fff" stroke="#444" stroke-width="0.9"/><circle cx="438.4" cy="447.7" r="1.1" fill="#333"/><circle cx="484.5" cy="439.9" r="1.7" fill="#fff" stroke="#777" stroke-width="0.8"/><circle cx="532.8" cy="465.9" r="1.7" fill="#fff" stroke="#777" stroke-width="0.8"/><circle cx="146.8" cy="387.4" r="1.7" fill="#fff" stroke="#777" stroke-width="0.8"/><circle cx="67.2" cy="405.2" r="2.3" fill="#fff" stroke="#444" stroke-width="0.9"/><circle cx="67.2" cy="405.2" r="1.1" fill="#333"/><circle cx="112.4" cy="421.7" r="1.7" fill="#fff" stroke="#777" stroke-width="0.8"/><circle cx="36.4" cy="457.6" r="1.7" fill="#fff" stroke="#777" stroke-width="0.8"/><circle cx="68.7" cy="461.0" r="1.7" fill="#fff" stroke="#777" stroke-width="0.8"/><circle cx="159.0" cy="468.5" r="2.3" fill="#fff" stroke="#444" stroke-width="0.9"/><circle cx="159.0" cy="468.5" r="1.1" fill="#333"/><circle cx="24.3" cy="514.4" r="2.3" fill="#fff" stroke="#444" stroke-width="0.9"/><circle cx="24.3" cy="514.4" r="1.1" fill="#333"/><circle cx="255.1" cy="467.3" r="2.3" fill="#fff" stroke="#444" stroke-width="0.9"/><circle cx="255.1" cy="467.3" r="1.1" fill="#333"/><circle cx="361.6" cy="1.0" r="2.3" fill="#fff" stroke="#444" stroke-width="0.9"/><circle cx="361.6" cy="1.0" r="1.1" fill="#333"/><text x="55.4" y="82.9" font-size="8.3" fill="#7e7e7e" stroke="#f8f4ed" stroke-width="1.6" stroke-opacity="0.8" paint-order="stroke">Edinburgh</text><text x="67.2" y="107.4" font-size="8.8" font-weight="bold" fill="#7a7a7a" stroke="#f8f4ed" stroke-width="1.6" stroke-opacity="0.8" paint-order="stroke">United</text><text x="61.8" y="117.1" font-size="8.8" font-weight="bold" fill="#7a7a7a" stroke="#f8f4ed" stroke-width="1.6" stroke-opacity="0.8" paint-order="stroke">Kingdom</text><text x="35.7" y="130.0" font-size="8.3" fill="#7e7e7e" stroke="#f8f4ed" stroke-width="1.6" stroke-opacity="0.8" paint-order="stroke">Isle of Man</text><text x="65.2" y="140.6" font-size="8.3" fill="#7e7e7e" stroke="#f8f4ed" stroke-width="1.6" stroke-opacity="0.8" paint-order="stroke">Manchester</text><text x="20.8" y="143.6" font-size="8.3" fill="#7e7e7e" stroke="#f8f4ed" stroke-width="1.6" stroke-opacity="0.8" paint-order="stroke">Dublin</text><text x="0.0" y="154.2" font-size="8.8" font-weight="bold" fill="#7a7a7a" stroke="#f8f4ed" stroke-width="1.6" stroke-opacity="0.8" paint-order="stroke">eland</text><text x="69.7" y="162.8" font-size="8.3" fill="#7e7e7e" stroke="#f8f4ed" stroke-width="1.6" stroke-opacity="0.8" paint-order="stroke">Birmingham</text><text x="101.8" y="183.5" font-size="8.3" fill="#7e7e7e" stroke="#f8f4ed" stroke-width="1.6" stroke-opacity="0.8" paint-order="stroke">London</text><text x="162.2" y="165.0" font-size="8.3" fill="#7e7e7e" stroke="#f8f4ed" stroke-width="1.6" stroke-opacity="0.8" paint-order="stroke">Amsterdam</text><text x="169.4" y="180.6" font-size="8.8" font-weight="bold" fill="#7a7a7a" stroke="#f8f4ed" stroke-width="1.6" stroke-opacity="0.8" paint-order="stroke">Netherlands</text><text x="163.1" y="212.8" font-size="8.8" font-weight="bold" fill="#7a7a7a" stroke="#f8f4ed" stroke-width="1.6" stroke-opacity="0.8" paint-order="stroke">Belgium</text><text x="173.6" y="228.5" font-size="8.8" font-weight="bold" fill="#7a7a7a" stroke="#f8f4ed" stroke-width="1.6" stroke-opacity="0.8" paint-order="stroke">Luxembourg</text><text x="139.6" y="240.0" font-size="8.3" fill="#7e7e7e" stroke="#f8f4ed" stroke-width="1.6" stroke-opacity="0.8" paint-order="stroke">Paris</text><text x="136.4" y="292.0" font-size="8.8" font-weight="bold" fill="#7a7a7a" stroke="#f8f4ed" stroke-width="1.6" stroke-opacity="0.8" paint-order="stroke">France</text><text x="235.0" y="97.6" font-size="8.8" font-weight="bold" fill="#7a7a7a" stroke="#f8f4ed" stroke-width="1.6" stroke-opacity="0.8" paint-order="stroke">Denmark</text><text x="235.6" y="139.0" font-size="8.3" fill="#7e7e7e" stroke="#f8f4ed" stroke-width="1.6" stroke-opacity="0.8" paint-order="stroke">Hamburg</text><text x="288.4" y="161.7" font-size="8.3" fill="#7e7e7e" stroke="#f8f4ed" stroke-width="1.6" stroke-opacity="0.8" paint-order="stroke">Berlin</text><text x="355.9" y="160.9" font-size="8.8" font-weight="bold" fill="#7a7a7a" stroke="#f8f4ed" stroke-width="1.6" stroke-opacity="0.8" paint-order="stroke">Poland</text><text x="386.6" y="168.1" font-size="8.3" fill="#7e7e7e" stroke="#f8f4ed" stroke-width="1.6" stroke-opacity="0.8" paint-order="stroke">Warsaw</text><text x="238.8" y="200.1" font-size="8.8" font-weight="bold" fill="#7a7a7a" stroke="#f8f4ed" stroke-width="1.6" stroke-opacity="0.8" paint-order="stroke">Germany</text><text x="299.7" y="214.3" font-size="8.3" fill="#7e7e7e" stroke="#f8f4ed" stroke-width="1.6" stroke-opacity="0.8" paint-order="stroke">Prague</text><text x="307.5" y="233.4" font-size="8.8" font-weight="bold" fill="#7a7a7a" stroke="#f8f4ed" stroke-width="1.6" stroke-opacity="0.8" paint-order="stroke">Czechia</text><text x="260.9" y="254.5" font-size="8.3" fill="#7e7e7e" stroke="#f8f4ed" stroke-width="1.6" stroke-opacity="0.8" paint-order="stroke">Munich</text><text x="326.6" y="252.8" font-size="8.3" fill="#7e7e7e" stroke="#f8f4ed" stroke-width="1.6" stroke-opacity="0.8" paint-order="stroke">Vienna</text><text x="361.6" y="250.4" font-size="8.8" font-weight="bold" fill="#7a7a7a" stroke="#f8f4ed" stroke-width="1.6" stroke-opacity="0.8" paint-order="stroke">Slovakia</text><text x="293.7" y="272.9" font-size="8.8" font-weight="bold" fill="#7a7a7a" stroke="#f8f4ed" stroke-width="1.6" stroke-opacity="0.8" paint-order="stroke">Austria</text><text x="358.0" y="267.2" font-size="8.3" fill="#7e7e7e" stroke="#f8f4ed" stroke-width="1.6" stroke-opacity="0.8" paint-order="stroke">Budapest</text><text x="364.4" y="285.2" font-size="8.8" font-weight="bold" fill="#7a7a7a" stroke="#f8f4ed" stroke-width="1.6" stroke-opacity="0.8" paint-order="stroke">Hungary</text><text x="199.8" y="288.4" font-size="8.8" font-weight="bold" fill="#7a7a7a" stroke="#f8f4ed" stroke-width="1.6" stroke-opacity="0.8" paint-order="stroke">Switzerland</text><text x="297.6" y="303.3" font-size="8.8" font-weight="bold" fill="#7a7a7a" stroke="#f8f4ed" stroke-width="1.6" stroke-opacity="0.8" paint-order="stroke">Slovenia</text><text x="232.0" y="307.3" font-size="8.3" fill="#7e7e7e" stroke="#f8f4ed" stroke-width="1.6" stroke-opacity="0.8" paint-order="stroke">Milan</text><text x="302.4" y="321.7" font-size="8.8" font-weight="bold" fill="#7a7a7a" stroke="#f8f4ed" stroke-width="1.6" stroke-opacity="0.8" paint-order="stroke">Croatia</text><text x="350.6" y="338.3" font-size="8.3" fill="#7e7e7e" stroke="#f8f4ed" stroke-width="1.6" stroke-opacity="0.8" paint-order="stroke">Sarajevo</text><text x="200.6" y="346.7" font-size="8.8" font-weight="bold" fill="#7a7a7a" stroke="#f8f4ed" stroke-width="1.6" stroke-opacity="0.8" paint-order="stroke">Monaco</text><text x="276.8" y="360.5" font-size="8.8" font-weight="bold" fill="#7a7a7a" stroke="#f8f4ed" stroke-width="1.6" stroke-opacity="0.8" paint-order="stroke">Italy</text><text x="344.9" y="358.4" font-size="7" fill="#8a8a8a" stroke="#f8f4ed" stroke-width="1.6" stroke-opacity="0.8" paint-order="stroke">Podgorica</text><text x="344.9" y="364.1" font-size="7" fill="#8a8a8a" stroke="#f8f4ed" stroke-width="1.6" stroke-opacity="0.8" paint-order="stroke">Подгорица</text><text x="289.3" y="380.7" font-size="8.3" fill="#7e7e7e" stroke="#f8f4ed" stroke-width="1.6" stroke-opacity="0.8" paint-order="stroke">Rome</text><text x="435.6" y="57.7" font-size="8.3" fill="#7e7e7e" stroke="#f8f4ed" stroke-width="1.6" stroke-opacity="0.8" paint-order="stroke">Riga</text><text x="456.6" y="63.6" font-size="8.8" font-weight="bold" fill="#7a7a7a" stroke="#f8f4ed" stroke-width="1.6" stroke-opacity="0.8" paint-order="stroke">Latvia</text><text x="421.2" y="97.6" font-size="8.8" font-weight="bold" fill="#7a7a7a" stroke="#f8f4ed" stroke-width="1.6" stroke-opacity="0.8" paint-order="stroke">Lithuania</text><text x="447.0" y="112.0" font-size="8.3" fill="#7e7e7e" stroke="#f8f4ed" stroke-width="1.6" stroke-opacity="0.8" paint-order="stroke">Vilnius</text><text x="478.9" y="122.4" font-size="8.3" fill="#7e7e7e" stroke="#f8f4ed" stroke-width="1.6" stroke-opacity="0.8" paint-order="stroke">Minsk</text><text x="478.9" y="129.8" font-size="8.3" fill="#7e7e7e" stroke="#f8f4ed" stroke-width="1.6" stroke-opacity="0.8" paint-order="stroke">Минск</text><text x="480.6" y="153.9" font-size="8.8" font-weight="bold" fill="#7a7a7a" stroke="#f8f4ed" stroke-width="1.6" stroke-opacity="0.8" paint-order="stroke">Belarus</text><text x="522.6" y="198.4" font-size="8.3" fill="#7e7e7e" stroke="#f8f4ed" stroke-width="1.6" stroke-opacity="0.8" paint-order="stroke">Kyiv</text><text x="522.6" y="205.8" font-size="8.3" fill="#7e7e7e" stroke="#f8f4ed" stroke-width="1.6" stroke-opacity="0.8" paint-order="stroke">Київ</text><text x="525.8" y="243.6" font-size="8.8" font-weight="bold" fill="#7a7a7a" stroke="#f8f4ed" stroke-width="1.6" stroke-opacity="0.8" paint-order="stroke">Ukraine</text><text x="484.8" y="272.6" font-size="8.8" font-weight="bold" fill="#7a7a7a" stroke="#f8f4ed" stroke-width="1.6" stroke-opacity="0.8" paint-order="stroke">Moldova</text><text x="491.8" y="290.3" font-size="8.3" fill="#7e7e7e" stroke="#f8f4ed" stroke-width="1.6" stroke-opacity="0.8" paint-order="stroke">Chișinău</text><text x="436.5" y="308.3" font-size="8.8" font-weight="bold" fill="#7a7a7a" stroke="#f8f4ed" stroke-width="1.6" stroke-opacity="0.8" paint-order="stroke">Romania</text><text x="451.8" y="326.8" font-size="8.3" fill="#7e7e7e" stroke="#f8f4ed" stroke-width="1.6" stroke-opacity="0.8" paint-order="stroke">Bucharest</text><text x="388.0" y="313.7" font-size="7" fill="#8a8a8a" stroke="#f8f4ed" stroke-width="1.6" stroke-opacity="0.8" paint-order="stroke">Belgrade</text><text x="388.0" y="320.3" font-size="7" fill="#8a8a8a" stroke="#f8f4ed" stroke-width="1.6" stroke-opacity="0.8" paint-order="stroke">Београд</text><text x="388.0" y="340.4" font-size="8.8" font-weight="bold" fill="#7a7a7a" stroke="#f8f4ed" stroke-width="1.6" stroke-opacity="0.8" paint-order="stroke">Serbia</text><text x="424.0" y="350.4" font-size="8.3" fill="#7e7e7e" stroke="#f8f4ed" stroke-width="1.6" stroke-opacity="0.8" paint-order="stroke">Sofia</text><text x="420.3" y="358.9" font-size="8.3" fill="#7e7e7e" stroke="#f8f4ed" stroke-width="1.6" stroke-opacity="0.8" paint-order="stroke">София</text><text x="441.0" y="370.0" font-size="8.8" font-weight="bold" fill="#7a7a7a" stroke="#f8f4ed" stroke-width="1.6" stroke-opacity="0.8" paint-order="stroke">Bulgaria</text><text x="386.2" y="367.0" font-size="8.3" fill="#7e7e7e" stroke="#f8f4ed" stroke-width="1.6" stroke-opacity="0.8" paint-order="stroke">Kosovo</text><text x="400.8" y="381.6" font-size="8.8" font-weight="bold" fill="#7a7a7a" stroke="#f8f4ed" stroke-width="1.6" stroke-opacity="0.8" paint-order="stroke">North</text><text x="390.3" y="389.6" font-size="8.8" font-weight="bold" fill="#7a7a7a" stroke="#f8f4ed" stroke-width="1.6" stroke-opacity="0.8" paint-order="stroke">Macedonia</text><text x="359.5" y="390.6" font-size="8.3" fill="#7e7e7e" stroke="#f8f4ed" stroke-width="1.6" stroke-opacity="0.8" paint-order="stroke">Tirana</text><text x="366.0" y="400.5" font-size="8.8" font-weight="bold" fill="#7a7a7a" stroke="#f8f4ed" stroke-width="1.6" stroke-opacity="0.8" paint-order="stroke">Albania</text><text x="494.2" y="390.1" font-size="8.3" fill="#7e7e7e" stroke="#f8f4ed" stroke-width="1.6" stroke-opacity="0.8" paint-order="stroke">İstanbul</text><text x="499.8" y="404.7" font-size="8.3" fill="#7e7e7e" stroke="#f8f4ed" stroke-width="1.6" stroke-opacity="0.8" paint-order="stroke">Bursa</text><text x="548.8" y="408.8" font-size="8.3" fill="#7e7e7e" stroke="#f8f4ed" stroke-width="1.6" stroke-opacity="0.8" paint-order="stroke">Ankara</text><text x="408.0" y="424.6" font-size="8.8" font-weight="bold" fill="#7a7a7a" stroke="#f8f4ed" stroke-width="1.6" stroke-opacity="0.8" paint-order="stroke">Greece</text><text x="425.5" y="435.0" font-size="8.3" fill="#7e7e7e" stroke="#f8f4ed" stroke-width="1.6" stroke-opacity="0.8" paint-order="stroke">Athens</text><text x="427.0" y="443.0" font-size="8.3" fill="#7e7e7e" stroke="#f8f4ed" stroke-width="1.6" stroke-opacity="0.8" paint-order="stroke">Αθήνα</text><text x="475.5" y="435.0" font-size="8.3" fill="#7e7e7e" stroke="#f8f4ed" stroke-width="1.6" stroke-opacity="0.8" paint-order="stroke">İzmir</text><text x="519.0" y="461.7" font-size="8.3" fill="#7e7e7e" stroke="#f8f4ed" stroke-width="1.6" stroke-opacity="0.8" paint-order="stroke">Antalya</text><text x="582.8" y="432.6" font-size="8.8" font-weight="bold" fill="#7a7a7a" stroke="#f8f4ed" stroke-width="1.6" stroke-opacity="0.8" paint-order="stroke">Tu</text><text x="551.7" y="499.8" font-size="8.8" font-weight="bold" fill="#7a7a7a" stroke="#f8f4ed" stroke-width="1.6" stroke-opacity="0.8" paint-order="stroke">C</text><text x="584.0" y="511.5" font-size="8.8" font-weight="bold" fill="#7a7a7a" stroke="#f8f4ed" stroke-width="1.6" stroke-opacity="0.8" paint-order="stroke">Le</text><text x="122.6" y="369.0" font-size="8.8" font-weight="bold" fill="#7a7a7a" stroke="#f8f4ed" stroke-width="1.6" stroke-opacity="0.8" paint-order="stroke">Andorra</text><text x="128.6" y="383.3" font-size="8.3" fill="#7e7e7e" stroke="#f8f4ed" stroke-width="1.6" stroke-opacity="0.8" paint-order="stroke">Barcelona</text><text x="54.6" y="400.6" font-size="8.3" fill="#7e7e7e" stroke="#f8f4ed" stroke-width="1.6" stroke-opacity="0.8" paint-order="stroke">Madrid</text><text x="60.7" y="424.1" font-size="8.8" font-weight="bold" fill="#7a7a7a" stroke="#f8f4ed" stroke-width="1.6" stroke-opacity="0.8" paint-order="stroke">Spain</text><text x="96.6" y="417.3" font-size="8.3" fill="#7e7e7e" stroke="#f8f4ed" stroke-width="1.6" stroke-opacity="0.8" paint-order="stroke">Valencia</text><text x="0.0" y="387.2" font-size="8.3" fill="#7e7e7e" stroke="#f8f4ed" stroke-width="1.6" stroke-opacity="0.8" paint-order="stroke">rto</text><text x="0.0" y="420.5" font-size="8.8" font-weight="bold" fill="#7a7a7a" stroke="#f8f4ed" stroke-width="1.6" stroke-opacity="0.8" paint-order="stroke">tugal</text><text x="0.0" y="430.2" font-size="8.3" fill="#7e7e7e" stroke="#f8f4ed" stroke-width="1.6" stroke-opacity="0.8" paint-order="stroke">on</text><text x="24.3" y="453.7" font-size="8.3" fill="#7e7e7e" stroke="#f8f4ed" stroke-width="1.6" stroke-opacity="0.8" paint-order="stroke">Seville</text><text x="56.6" y="457.6" font-size="7.2" fill="#8a8a8a" stroke="#f8f4ed" stroke-width="1.6" stroke-opacity="0.8" paint-order="stroke">Granada</text><text x="26.2" y="481.9" font-size="8.8" font-weight="bold" fill="#7a7a7a" stroke="#f8f4ed" stroke-width="1.6" stroke-opacity="0.8" paint-order="stroke">Gibraltar</text><text x="146.4" y="456.1" font-size="8.3" fill="#7e7e7e" stroke="#f8f4ed" stroke-width="1.6" stroke-opacity="0.8" paint-order="stroke">Algiers</text><text x="137.1" y="464.2" font-size="8.3" fill="#7e7e7e" stroke="#f8f4ed" stroke-width="1.6" stroke-opacity="0.8" paint-order="stroke">مدينة الجزائر</text><text x="14.1" y="501.8" font-size="8.3" fill="#7e7e7e" stroke="#f8f4ed" stroke-width="1.6" stroke-opacity="0.8" paint-order="stroke">Rabat</text><text x="18.0" y="509.5" font-size="8.3" fill="#7e7e7e" stroke="#f8f4ed" stroke-width="1.6" stroke-opacity="0.8" paint-order="stroke">الرباط</text><text x="245.4" y="454.4" font-size="8.3" fill="#7e7e7e" stroke="#f8f4ed" stroke-width="1.6" stroke-opacity="0.8" paint-order="stroke">Tunis</text><text x="248.0" y="463.0" font-size="8.3" fill="#7e7e7e" stroke="#f8f4ed" stroke-width="1.6" stroke-opacity="0.8" paint-order="stroke">تونس</text><text x="300.7" y="485.3" font-size="8.8" font-weight="bold" fill="#7a7a7a" stroke="#f8f4ed" stroke-width="1.6" stroke-opacity="0.8" paint-order="stroke">Malta</text><text x="231.6" y="515.4" font-size="8.8" font-weight="bold" fill="#7a7a7a" stroke="#f8f4ed" stroke-width="1.6" stroke-opacity="0.8" paint-order="stroke">Tunisia</text><text x="283.7" y="519.3" font-size="8.3" fill="#7e7e7e" stroke="#f8f4ed" stroke-width="1.6" stroke-opacity="0.8" paint-order="stroke">Tripoli</text></svg><svg width="594" height="522" viewBox="0 0 594 522" style="position:absolute;left:0;top:0"><circle cx="107.8" cy="193.8" r="6.5" fill="#6600f5"/><circle cx="211.6" cy="176.1" r="6.6" fill="#6600f5"/><circle cx="277.2" cy="187.3" r="6.6" fill="#6600f5"/><circle cx="336.1" cy="193.6" r="9.0" fill="#6600f5"/><circle cx="513.4" cy="213.9" r="6.7" fill="#6600f5"/><circle cx="179.7" cy="245.5" r="6.6" fill="#6600f5"/><circle cx="373.7" cy="253.4" r="4.8" fill="#6600f5"/><circle cx="103.7" cy="308.5" r="4.8" fill="#6600f5"/><circle cx="265.3" cy="323.4" r="8.9" fill="#6600f5"/><circle cx="420.3" cy="322.8" r="8.9" fill="#6600f5"/><circle cx="108.3" cy="388.0" r="4.8" fill="#6600f5"/></svg></div>
  <div class="mbtn" style="left:785px;top:129.5px;width:66px;height:25.5px"></div>
  <div class="abs" style="left:792.5px;top:137.6px;font-size:9.6px;color:#222">Fuel station</div>
  <div class="mbtn" style="left:857.7px;top:129.5px;width:57.3px;height:25.5px"></div>
  <div class="abs" style="left:870.1px;top:137.6px;font-size:9.7px;color:#222">Parking</div>
  <div class="mbtn" style="left:888.7px;top:541px;width:26.3px;height:26px"></div>
  <svg class="abs" style="left:893px;top:545px" width="18" height="18" viewBox="0 0 18 18" fill="none" stroke="#333" stroke-width="1.2"><path d="M9 15.2c-2.5-2.6-4.3-4.6-4.3-7a4.3 4.3 0 0 1 8.6 0c0 2.4-1.8 4.4-4.3 7z"/><circle cx="9" cy="8.2" r="1.7"/></svg>
  <div class="mbtn" style="left:888.7px;top:573px;width:26.3px;height:25.7px"></div>
  <svg class="abs" style="left:893px;top:577px" width="18" height="18"><path d="M9 4.5v9M4.5 9h9" stroke="#555" stroke-width="1.5"/></svg>
  <div class="mbtn" style="left:888.7px;top:604.7px;width:26.3px;height:26.3px"></div>
  <svg class="abs" style="left:893px;top:609px" width="18" height="18"><path d="M4.8 9h8.4" stroke="#666" stroke-width="1.5"/></svg>
</div>
</body></html>
